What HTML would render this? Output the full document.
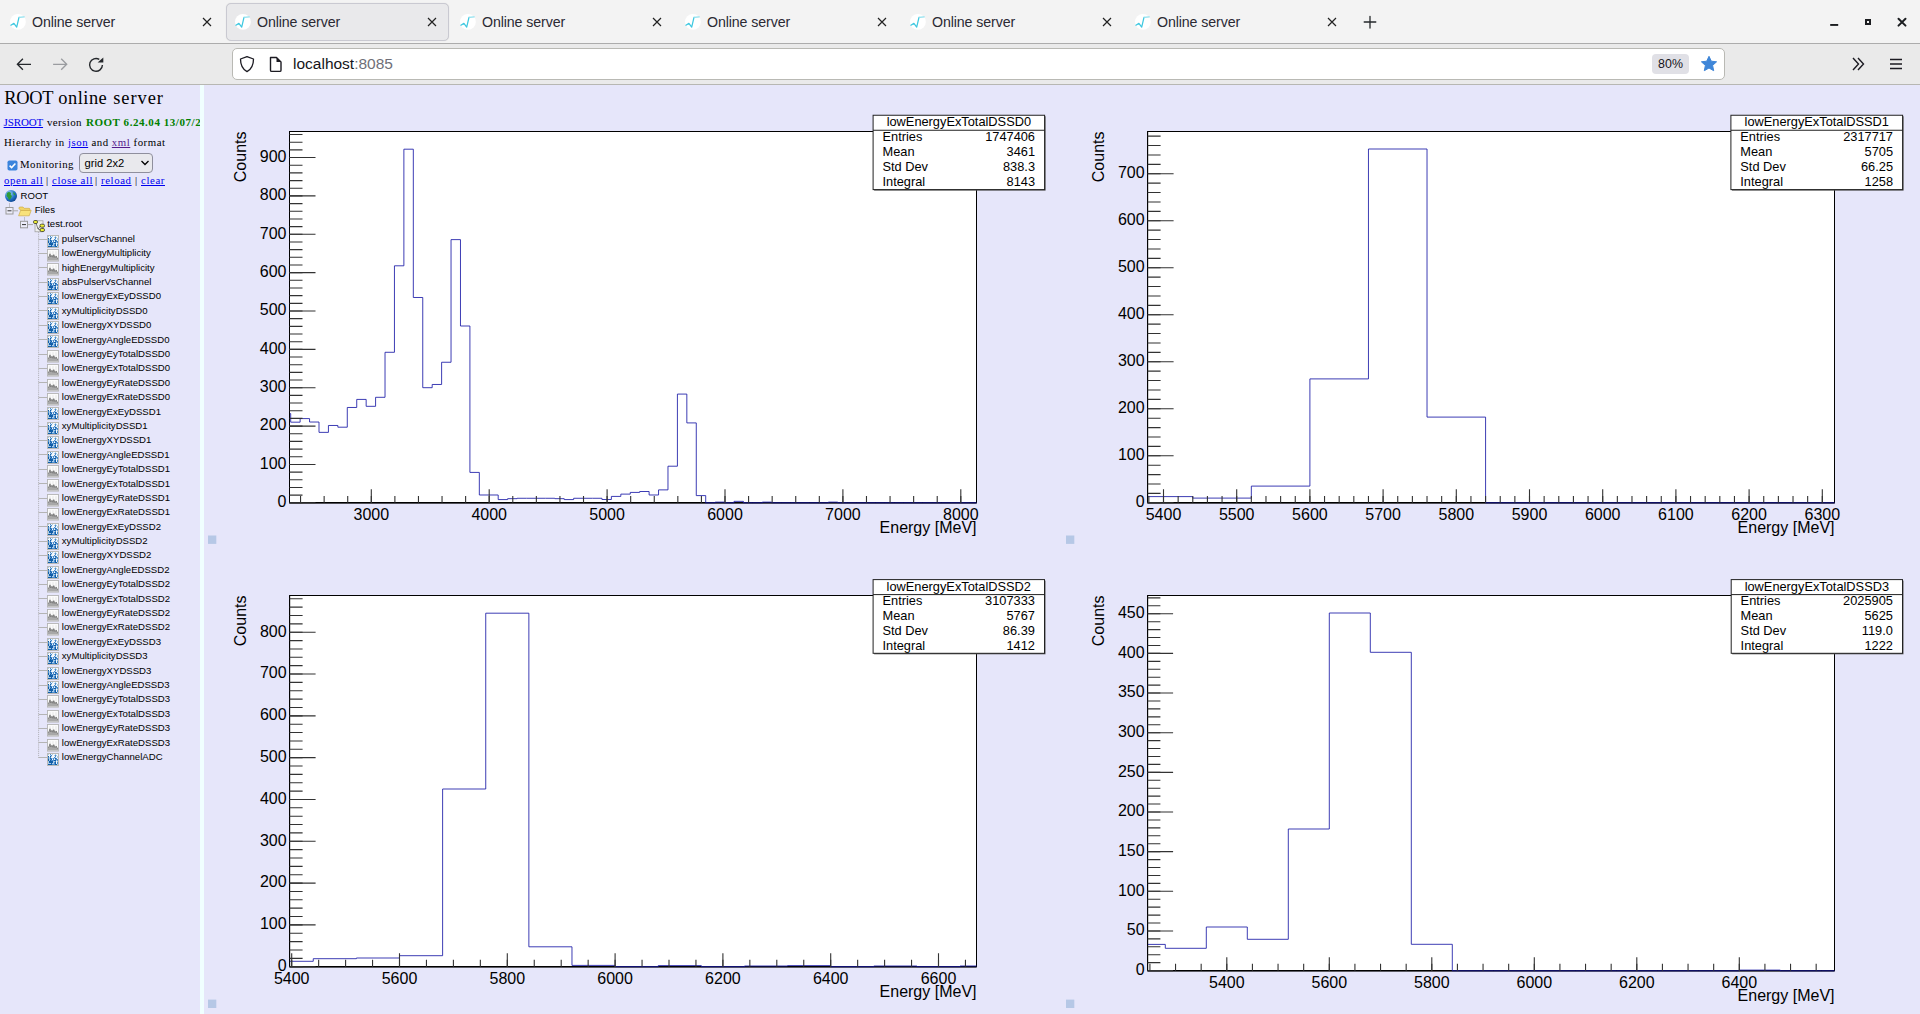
<!DOCTYPE html><html><head><meta charset="utf-8"><title>Online server</title><style>*{margin:0;padding:0;box-sizing:border-box}
html,body{width:1920px;height:1014px;overflow:hidden;background:#e6e6fa;font-family:'Liberation Sans', sans-serif}
.abs{position:absolute}
#tabbar{position:absolute;left:0;top:0;width:1920px;height:44px;background:#f3f3f3;border-bottom:1px solid #acacac}
#toolbar{position:absolute;left:0;top:44px;width:1920px;height:41px;background:#eaeaea;border-bottom:1px solid #b7b7b2}
.tab{position:absolute;top:3.4px;height:37.2px;width:223px}
.tab.sel{background:#e9e9eb;border:1px solid #c9c9d1;border-radius:5px;box-shadow:0 0 1px rgba(0,0,0,.15)}
.tabt{position:absolute;top:9px;font-size:14.2px;color:#2b2a33;white-space:nowrap;letter-spacing:-0.1px}
#side{position:absolute;left:0;top:85px;width:200px;height:929px;background:#e6e6fa;overflow:hidden;font-family:'Liberation Serif', serif;font-size:12px;color:#000}
#sep{position:absolute;left:200px;top:85px;width:4px;height:929px;background:#f0ffff}
.lnk{color:#0000ee;text-decoration:underline}
.tree{position:absolute;font-family:'Liberation Sans', sans-serif;font-size:9.6px;color:#000;white-space:nowrap}
</style></head><body><div id="tabbar"></div><div class="tab" style="left:1px"></div><div class="tab sel" style="left:226px"></div><div class="tab" style="left:451px"></div><div class="tab" style="left:676px"></div><div class="tab" style="left:901px"></div><div class="tab" style="left:1126px"></div><div class="abs" style="left:9.8px;top:13.8px;width:16px;height:16px"><svg width="16" height="16" viewBox="0 0 16 16"><circle cx="7.9" cy="7.95" r="7.9" fill="#fff"/><path d="M0.9,11.2 L3.9,9.4 L6.7,13.1 L9,3.4" fill="none" stroke="#3ec8e0" stroke-width="1.25" stroke-linejoin="round" stroke-linecap="round"/><path d="M9,3.4 L14.2,2.9" fill="none" stroke="#8fe0ee" stroke-width="1.2" stroke-linecap="round"/></svg></div><div class="tabt" style="left:32px;top:13.5px">Online server</div><svg class="abs" style="left:201px;top:16px" width="12" height="12"><path d="M2,2L10,10M10,2L2,10" stroke="#222" stroke-width="1.2"/></svg><div class="abs" style="left:234.8px;top:13.8px;width:16px;height:16px"><svg width="16" height="16" viewBox="0 0 16 16"><circle cx="7.9" cy="7.95" r="7.9" fill="#fff"/><path d="M0.9,11.2 L3.9,9.4 L6.7,13.1 L9,3.4" fill="none" stroke="#3ec8e0" stroke-width="1.25" stroke-linejoin="round" stroke-linecap="round"/><path d="M9,3.4 L14.2,2.9" fill="none" stroke="#8fe0ee" stroke-width="1.2" stroke-linecap="round"/></svg></div><div class="tabt" style="left:257px;top:13.5px">Online server</div><svg class="abs" style="left:426px;top:16px" width="12" height="12"><path d="M2,2L10,10M10,2L2,10" stroke="#222" stroke-width="1.2"/></svg><div class="abs" style="left:459.8px;top:13.8px;width:16px;height:16px"><svg width="16" height="16" viewBox="0 0 16 16"><circle cx="7.9" cy="7.95" r="7.9" fill="#fff"/><path d="M0.9,11.2 L3.9,9.4 L6.7,13.1 L9,3.4" fill="none" stroke="#3ec8e0" stroke-width="1.25" stroke-linejoin="round" stroke-linecap="round"/><path d="M9,3.4 L14.2,2.9" fill="none" stroke="#8fe0ee" stroke-width="1.2" stroke-linecap="round"/></svg></div><div class="tabt" style="left:482px;top:13.5px">Online server</div><svg class="abs" style="left:651px;top:16px" width="12" height="12"><path d="M2,2L10,10M10,2L2,10" stroke="#222" stroke-width="1.2"/></svg><div class="abs" style="left:684.8px;top:13.8px;width:16px;height:16px"><svg width="16" height="16" viewBox="0 0 16 16"><circle cx="7.9" cy="7.95" r="7.9" fill="#fff"/><path d="M0.9,11.2 L3.9,9.4 L6.7,13.1 L9,3.4" fill="none" stroke="#3ec8e0" stroke-width="1.25" stroke-linejoin="round" stroke-linecap="round"/><path d="M9,3.4 L14.2,2.9" fill="none" stroke="#8fe0ee" stroke-width="1.2" stroke-linecap="round"/></svg></div><div class="tabt" style="left:707px;top:13.5px">Online server</div><svg class="abs" style="left:876px;top:16px" width="12" height="12"><path d="M2,2L10,10M10,2L2,10" stroke="#222" stroke-width="1.2"/></svg><div class="abs" style="left:909.8px;top:13.8px;width:16px;height:16px"><svg width="16" height="16" viewBox="0 0 16 16"><circle cx="7.9" cy="7.95" r="7.9" fill="#fff"/><path d="M0.9,11.2 L3.9,9.4 L6.7,13.1 L9,3.4" fill="none" stroke="#3ec8e0" stroke-width="1.25" stroke-linejoin="round" stroke-linecap="round"/><path d="M9,3.4 L14.2,2.9" fill="none" stroke="#8fe0ee" stroke-width="1.2" stroke-linecap="round"/></svg></div><div class="tabt" style="left:932px;top:13.5px">Online server</div><svg class="abs" style="left:1101px;top:16px" width="12" height="12"><path d="M2,2L10,10M10,2L2,10" stroke="#222" stroke-width="1.2"/></svg><div class="abs" style="left:1134.8px;top:13.8px;width:16px;height:16px"><svg width="16" height="16" viewBox="0 0 16 16"><circle cx="7.9" cy="7.95" r="7.9" fill="#fff"/><path d="M0.9,11.2 L3.9,9.4 L6.7,13.1 L9,3.4" fill="none" stroke="#3ec8e0" stroke-width="1.25" stroke-linejoin="round" stroke-linecap="round"/><path d="M9,3.4 L14.2,2.9" fill="none" stroke="#8fe0ee" stroke-width="1.2" stroke-linecap="round"/></svg></div><div class="tabt" style="left:1157px;top:13.5px">Online server</div><svg class="abs" style="left:1326px;top:16px" width="12" height="12"><path d="M2,2L10,10M10,2L2,10" stroke="#222" stroke-width="1.2"/></svg><svg class="abs" style="left:1361.5px;top:14.4px" width="16" height="16"><path d="M8,2.3V14M2.2,8H13.8" stroke="#25282b" stroke-width="1.3" stroke-linecap="round"/></svg><svg class="abs" style="left:1820px;top:10px" width="100" height="24"><rect x="10.2" y="14" width="8" height="1.9" fill="#1b1d20"/><rect x="46" y="10" width="4" height="4" fill="none" stroke="#1b1d20" stroke-width="2"/><path d="M78.5,8.8L85.5,15.6M85.5,8.8L78.5,15.6" stroke="#1b1d20" stroke-width="2" stroke-linecap="round"/></svg><div id="toolbar"></div><svg class="abs" style="left:0;top:44px" width="120" height="40"><path d="M17.6,20.3H31M22.9,14.8L17.4,20.3L22.9,25.8" fill="none" stroke="#25282c" stroke-width="1.35"/><path d="M53.1,20.3H66.5M61.2,14.8L66.7,20.3L61.2,25.8" fill="none" stroke="#9a9ca0" stroke-width="1.35"/><path d="M102.4,21 A6.4,6.4 0 1 1 99.3,15.4" fill="none" stroke="#25282c" stroke-width="1.4"/><path d="M97.6,18.6 L103.3,13.6 L103.3,18.6 Z" fill="#25282c"/></svg><div class="abs" style="left:231.5px;top:48px;width:1493px;height:32px;background:#fff;border:1px solid #b9b9b4;border-radius:5px"></div><svg class="abs" style="left:236px;top:52px" width="60" height="24"><path d="M11,4.6 L17.5,7 C17.5,13.5 15,17.5 11,19.6 C7,17.5 4.5,13.5 4.5,7 Z" fill="none" stroke="#1c1b22" stroke-width="1.3" stroke-linejoin="round"/><path d="M34.5,5.5 H40.5 L45,10 V18.2 A1.2,1.2 0 0 1 43.8,19.4 H35.7 A1.2,1.2 0 0 1 34.5,18.2 Z" fill="none" stroke="#1c1b22" stroke-width="1.4" stroke-linejoin="round"/><path d="M40.5,5.5 V10 H45 Z" fill="#1c1b22"/></svg><div class="abs" style="left:293px;top:54.8px;font-size:15.5px;color:#15141a;white-space:nowrap">localhost<span style="color:#6f6f78">:8085</span></div><div class="abs" style="left:1652px;top:54px;width:37px;height:20px;background:#e0e0e6;border-radius:4px;font-size:12.4px;color:#15141a;text-align:center;line-height:20px">80%</div><svg class="abs" style="left:1700px;top:55px" width="18" height="18"><path d="M9,1.3 L11.3,6.2 L16.6,6.8 L12.6,10.4 L13.7,15.7 L9,13 L4.3,15.7 L5.4,10.4 L1.4,6.8 L6.7,6.2 Z" fill="#3f86d8" stroke="#3f86d8" stroke-width="1" stroke-linejoin="round"/></svg><svg class="abs" style="left:1848px;top:54px" width="60" height="20"><path d="M5,4 L10.5,10 L5,16 M10,4 L15.5,10 L10,16" fill="none" stroke="#1c1b22" stroke-width="1.4"/><path d="M42,5.5H54M42,10H54M42,14.5H54" stroke="#1c1b22" stroke-width="1.4"/></svg><div id="side"><div class="abs" style="left:4.3px;top:3.2px;font-size:18.4px;white-space:nowrap;letter-spacing:-0.3px">ROOT</div><div class="abs" style="left:58.3px;top:3.2px;font-size:18.4px;white-space:nowrap;letter-spacing:0.5px">online</div><div class="abs" style="left:113.2px;top:3.2px;font-size:18.4px;white-space:nowrap;letter-spacing:0.95px">server</div><div class="abs" style="left:3.6px;top:30.6px;font-size:11px;white-space:nowrap;letter-spacing:-0.15px"><span class="lnk">JSROOT</span></div><div class="abs" style="left:47px;top:30.6px;font-size:11px;white-space:nowrap;letter-spacing:0.35px">version</div><div class="abs" style="left:85.9px;top:30.6px;font-size:11px;white-space:nowrap;letter-spacing:0.55px"><b style="color:#008000">ROOT 6.24.04 13/07/2021</b></div><div class="abs" style="left:4px;top:51.2px;font-size:10.8px;letter-spacing:0.54px;white-space:nowrap">Hierarchy in <span class="lnk">json</span> and <span class="lnk" style="color:#551a8b">xml</span> format</div><svg class="abs" style="left:6.5px;top:74.5px" width="11" height="11"><rect x="0.5" y="0.5" width="10" height="10" rx="1.8" fill="#3b84dc"/><path d="M2.6,5.6 L4.6,7.6 L8.4,3.4" fill="none" stroke="#fff" stroke-width="1.5"/></svg><div class="abs" style="left:20px;top:73px;font-size:10.8px;letter-spacing:0.47px;white-space:nowrap">Monitoring</div><div class="abs" style="left:78.5px;top:68.2px;width:74px;height:19.5px;border:1px solid #8f8f9d;border-radius:4px;background:#e9e9ed;font-family:'Liberation Sans', sans-serif;font-size:11.2px;padding-left:5px;line-height:19.5px;color:#000">grid 2x2</div><svg class="abs" style="left:140px;top:74px" width="10" height="8"><path d="M1.5,2 L5,5.5 L8.5,2" fill="none" stroke="#000" stroke-width="1.3"/></svg><div class="abs" style="left:4px;top:88.5px;font-size:10.8px;letter-spacing:0.6px;white-space:nowrap"><span class="lnk">open all</span></div><div class="abs" style="left:46px;top:88.5px;font-size:10.8px;letter-spacing:0.6px">|</div><div class="abs" style="left:52px;top:88.5px;font-size:10.8px;letter-spacing:0.6px;white-space:nowrap"><span class="lnk">close all</span></div><div class="abs" style="left:95px;top:88.5px;font-size:10.8px;letter-spacing:0.6px">|</div><div class="abs" style="left:101px;top:88.5px;font-size:10.8px;letter-spacing:0.6px;white-space:nowrap"><span class="lnk">reload</span></div><div class="abs" style="left:135px;top:88.5px;font-size:10.8px;letter-spacing:0.6px">|</div><div class="abs" style="left:141px;top:88.5px;font-size:10.8px;letter-spacing:0.6px;white-space:nowrap"><span class="lnk">clear</span></div></div><svg class="abs" style="left:4px;top:189px" width="14" height="15"><defs><radialGradient id="gg" cx="0.35" cy="0.3" r="0.8"><stop offset="0" stop-color="#9fd3ff"/><stop offset="0.6" stop-color="#1f6fc4"/><stop offset="1" stop-color="#0b3c86"/></radialGradient></defs><circle cx="7" cy="7" r="6" fill="url(#gg)"/><path d="M3,4 Q5,2 7,4 Q6,6 8,7 Q7,10 5,11 Q4,8 2.5,7 Z" fill="#2e9b3a"/><path d="M9,3 Q11,4 11.5,6 Q10,7 9.5,5 Z" fill="#2e9b3a"/></svg><div class="tree" style="left:20.5px;top:189.7px">ROOT</div><svg class="abs" style="left:0;top:200px" width="60" height="560"><path d="M9.5,3.5V7" stroke="#999" stroke-width="1" stroke-dasharray="1,1"/><rect x="6" y="7.5" width="7" height="6.5" fill="#fff" fill-opacity="0.3" stroke="#9a9a9a" stroke-width="1"/><path d="M7.5,10.8H11.5" stroke="#333" stroke-width="1"/><path d="M13,10.8H18" stroke="#aaa" stroke-width="1"/><path d="M24.5,17.5V21" stroke="#999" stroke-width="1" stroke-dasharray="1,1"/><rect x="20.5" y="21.3" width="7" height="6.5" fill="#fff" fill-opacity="0.3" stroke="#9a9a9a" stroke-width="1"/><path d="M22,24.6H26" stroke="#333" stroke-width="1"/><path d="M27.5,24.6H33" stroke="#aaa" stroke-width="1"/><path d="M38.6,32V557.8" fill="none" stroke="#b4b4bc" stroke-width="1" stroke-dasharray="1.2,0.9"/></svg><svg class="abs" style="left:17.5px;top:205.5px" width="14" height="11"><path d="M0.8,2.5 Q0.8,1 2,1 H5 L6.2,2.3 H11 Q12,2.3 12,3.3 V4.5 H3 Z" fill="#f2d66a" stroke="#c9a43a" stroke-width="0.6"/><path d="M0.6,9.8 L2.6,4.4 H13.2 L11.2,9.8 Z" fill="#f8e27c" stroke="#c9a43a" stroke-width="0.6"/></svg><div class="tree" style="left:34.7px;top:204.2px">Files</div><svg class="abs" style="left:32.5px;top:219.5px" width="14" height="13"><rect x="2" y="0.8" width="8" height="11" fill="#eee" stroke="#999" stroke-width="0.7"/><rect x="0.5" y="0.5" width="4" height="3" rx="1.3" fill="#ee3" stroke="#222" stroke-width="0.7"/><rect x="7" y="4.2" width="4.5" height="3" rx="1.3" fill="#ee3" stroke="#222" stroke-width="0.7"/><rect x="7" y="8.5" width="4.5" height="3" rx="1.3" fill="#ee3" stroke="#222" stroke-width="0.7"/><path d="M3,3 L5,9 L7.5,6 M5,9 L7.5,10" stroke="#333" stroke-width="0.6" fill="none"/></svg><div class="tree" style="left:47.2px;top:217.6px">test.root</div><div class="abs" style="left:47px;top:234px;width:12px;height:13px"><svg width="12" height="13" shape-rendering="crispEdges"><rect x="0.5" y="0.5" width="11" height="11.6" fill="#dde6ee" stroke="#b5b5b0" stroke-width="0.9"/><path d="M1,1.00h1.05v1.12h-1.05zM5,1.00h1.05v1.12h-1.05zM8,1.00h1.05v1.12h-1.05zM3,2.06h1.05v1.12h-1.05zM7,2.06h1.05v1.12h-1.05zM9,2.06h1.05v1.12h-1.05zM4,3.12h1.05v1.12h-1.05zM10,3.12h1.05v1.12h-1.05zM2,4.18h1.05v1.12h-1.05zM8,4.18h1.05v1.12h-1.05zM10,4.18h1.05v1.12h-1.05zM2,5.24h1.05v1.12h-1.05zM5,5.24h1.05v1.12h-1.05zM7,5.24h1.05v1.12h-1.05zM2,6.30h1.05v1.12h-1.05zM2,7.36h1.05v1.12h-1.05zM9,7.36h1.05v1.12h-1.05zM1,8.42h1.05v1.12h-1.05zM6,8.42h1.05v1.12h-1.05zM7,8.42h1.05v1.12h-1.05zM10,8.42h1.05v1.12h-1.05zM1,9.48h1.05v1.12h-1.05zM2,9.48h1.05v1.12h-1.05zM3,9.48h1.05v1.12h-1.05zM5,9.48h1.05v1.12h-1.05zM6,9.48h1.05v1.12h-1.05zM10,10.54h1.05v1.12h-1.05z" fill="#a8cae8"/><path d="M2,1.00h1.05v1.12h-1.05zM4,1.00h1.05v1.12h-1.05zM6,1.00h1.05v1.12h-1.05zM7,1.00h1.05v1.12h-1.05zM9,1.00h1.05v1.12h-1.05zM10,1.00h1.05v1.12h-1.05zM1,2.06h1.05v1.12h-1.05zM2,2.06h1.05v1.12h-1.05zM5,2.06h1.05v1.12h-1.05zM6,2.06h1.05v1.12h-1.05zM10,2.06h1.05v1.12h-1.05zM2,3.12h1.05v1.12h-1.05zM5,3.12h1.05v1.12h-1.05zM6,3.12h1.05v1.12h-1.05zM7,3.12h1.05v1.12h-1.05zM9,3.12h1.05v1.12h-1.05zM4,4.18h1.05v1.12h-1.05zM5,4.18h1.05v1.12h-1.05zM6,4.18h1.05v1.12h-1.05zM9,4.18h1.05v1.12h-1.05zM10,5.24h1.05v1.12h-1.05zM5,6.30h1.05v1.12h-1.05zM7,6.30h1.05v1.12h-1.05zM9,8.42h1.05v1.12h-1.05zM9,9.48h1.05v1.12h-1.05z" fill="#f4f8fc"/><path d="M3,1.00h1.05v1.12h-1.05zM4,2.06h1.05v1.12h-1.05zM8,2.06h1.05v1.12h-1.05zM8,3.12h1.05v1.12h-1.05zM1,4.18h1.05v1.12h-1.05zM3,4.18h1.05v1.12h-1.05zM7,4.18h1.05v1.12h-1.05zM1,5.24h1.05v1.12h-1.05zM4,5.24h1.05v1.12h-1.05zM6,5.24h1.05v1.12h-1.05zM9,5.24h1.05v1.12h-1.05zM3,6.30h1.05v1.12h-1.05zM6,6.30h1.05v1.12h-1.05zM8,6.30h1.05v1.12h-1.05zM9,6.30h1.05v1.12h-1.05zM10,6.30h1.05v1.12h-1.05zM4,7.36h1.05v1.12h-1.05zM5,7.36h1.05v1.12h-1.05zM6,7.36h1.05v1.12h-1.05zM10,7.36h1.05v1.12h-1.05zM8,8.42h1.05v1.12h-1.05zM7,9.48h1.05v1.12h-1.05zM10,9.48h1.05v1.12h-1.05zM5,10.54h1.05v1.12h-1.05zM6,10.54h1.05v1.12h-1.05zM7,10.54h1.05v1.12h-1.05z" fill="#4a8ccc"/><path d="M1,3.12h1.05v1.12h-1.05zM3,3.12h1.05v1.12h-1.05zM3,5.24h1.05v1.12h-1.05zM8,5.24h1.05v1.12h-1.05zM1,6.30h1.05v1.12h-1.05zM4,6.30h1.05v1.12h-1.05zM1,7.36h1.05v1.12h-1.05zM3,7.36h1.05v1.12h-1.05zM7,7.36h1.05v1.12h-1.05zM8,7.36h1.05v1.12h-1.05zM2,8.42h1.05v1.12h-1.05zM3,8.42h1.05v1.12h-1.05zM4,8.42h1.05v1.12h-1.05zM5,8.42h1.05v1.12h-1.05zM4,9.48h1.05v1.12h-1.05zM8,9.48h1.05v1.12h-1.05zM1,10.54h1.05v1.12h-1.05zM2,10.54h1.05v1.12h-1.05zM3,10.54h1.05v1.12h-1.05zM4,10.54h1.05v1.12h-1.05zM8,10.54h1.05v1.12h-1.05zM9,10.54h1.05v1.12h-1.05z" fill="#115ea8"/></svg></div><div class="tree" style="left:61.8px;top:232.8px">pulserVsChannel</div><svg class="abs" style="left:38px;top:238px" width="10" height="2"><path d="M0.6,1.5H9.2" stroke="#b4b4b4" stroke-width="1"/></svg><div class="abs" style="left:47px;top:248px;width:12px;height:13px"><svg width="12" height="13"><rect x="0.5" y="0.5" width="11" height="11.6" fill="#fbfbfb" stroke="#b4b4b4" stroke-width="0.9"/><path d="M3,2.2v5M6,2.2v5M9,2.2v5" stroke="#dcdcdc" stroke-width="0.7"/><path d="M1,11.6 V8.6 L2,7.8 L3,4.8 L3.8,8 L5,6.2 L6,8.3 L6.8,5.6 L8,8.6 L9.2,7 L10,9 L11,9.6 V11.6 Z" fill="#a8a8a8"/><path d="M1,8.6 L2,7.8 L3,4.8 L3.8,8 L5,6.2 L6,8.3 L6.8,5.6 L8,8.6 L9.2,7 L10,9 L11,9.6" fill="none" stroke="#555" stroke-width="0.6"/></svg></div><div class="tree" style="left:61.8px;top:247.2px">lowEnergyMultiplicity</div><svg class="abs" style="left:38px;top:252px" width="10" height="2"><path d="M0.6,1.5H9.2" stroke="#b4b4b4" stroke-width="1"/></svg><div class="abs" style="left:47px;top:262px;width:12px;height:13px"><svg width="12" height="13"><rect x="0.5" y="0.5" width="11" height="11.6" fill="#fbfbfb" stroke="#b4b4b4" stroke-width="0.9"/><path d="M3,2.2v5M6,2.2v5M9,2.2v5" stroke="#dcdcdc" stroke-width="0.7"/><path d="M1,11.6 V8.6 L2,7.8 L3,4.8 L3.8,8 L5,6.2 L6,8.3 L6.8,5.6 L8,8.6 L9.2,7 L10,9 L11,9.6 V11.6 Z" fill="#a8a8a8"/><path d="M1,8.6 L2,7.8 L3,4.8 L3.8,8 L5,6.2 L6,8.3 L6.8,5.6 L8,8.6 L9.2,7 L10,9 L11,9.6" fill="none" stroke="#555" stroke-width="0.6"/></svg></div><div class="tree" style="left:61.8px;top:261.59px">highEnergyMultiplicity</div><svg class="abs" style="left:38px;top:266px" width="10" height="2"><path d="M0.6,1.5H9.2" stroke="#b4b4b4" stroke-width="1"/></svg><div class="abs" style="left:47px;top:277px;width:12px;height:13px"><svg width="12" height="13" shape-rendering="crispEdges"><rect x="0.5" y="0.5" width="11" height="11.6" fill="#dde6ee" stroke="#b5b5b0" stroke-width="0.9"/><path d="M1,1.00h1.05v1.12h-1.05zM5,1.00h1.05v1.12h-1.05zM8,1.00h1.05v1.12h-1.05zM3,2.06h1.05v1.12h-1.05zM7,2.06h1.05v1.12h-1.05zM9,2.06h1.05v1.12h-1.05zM4,3.12h1.05v1.12h-1.05zM10,3.12h1.05v1.12h-1.05zM2,4.18h1.05v1.12h-1.05zM8,4.18h1.05v1.12h-1.05zM10,4.18h1.05v1.12h-1.05zM2,5.24h1.05v1.12h-1.05zM5,5.24h1.05v1.12h-1.05zM7,5.24h1.05v1.12h-1.05zM2,6.30h1.05v1.12h-1.05zM2,7.36h1.05v1.12h-1.05zM9,7.36h1.05v1.12h-1.05zM1,8.42h1.05v1.12h-1.05zM6,8.42h1.05v1.12h-1.05zM7,8.42h1.05v1.12h-1.05zM10,8.42h1.05v1.12h-1.05zM1,9.48h1.05v1.12h-1.05zM2,9.48h1.05v1.12h-1.05zM3,9.48h1.05v1.12h-1.05zM5,9.48h1.05v1.12h-1.05zM6,9.48h1.05v1.12h-1.05zM10,10.54h1.05v1.12h-1.05z" fill="#a8cae8"/><path d="M2,1.00h1.05v1.12h-1.05zM4,1.00h1.05v1.12h-1.05zM6,1.00h1.05v1.12h-1.05zM7,1.00h1.05v1.12h-1.05zM9,1.00h1.05v1.12h-1.05zM10,1.00h1.05v1.12h-1.05zM1,2.06h1.05v1.12h-1.05zM2,2.06h1.05v1.12h-1.05zM5,2.06h1.05v1.12h-1.05zM6,2.06h1.05v1.12h-1.05zM10,2.06h1.05v1.12h-1.05zM2,3.12h1.05v1.12h-1.05zM5,3.12h1.05v1.12h-1.05zM6,3.12h1.05v1.12h-1.05zM7,3.12h1.05v1.12h-1.05zM9,3.12h1.05v1.12h-1.05zM4,4.18h1.05v1.12h-1.05zM5,4.18h1.05v1.12h-1.05zM6,4.18h1.05v1.12h-1.05zM9,4.18h1.05v1.12h-1.05zM10,5.24h1.05v1.12h-1.05zM5,6.30h1.05v1.12h-1.05zM7,6.30h1.05v1.12h-1.05zM9,8.42h1.05v1.12h-1.05zM9,9.48h1.05v1.12h-1.05z" fill="#f4f8fc"/><path d="M3,1.00h1.05v1.12h-1.05zM4,2.06h1.05v1.12h-1.05zM8,2.06h1.05v1.12h-1.05zM8,3.12h1.05v1.12h-1.05zM1,4.18h1.05v1.12h-1.05zM3,4.18h1.05v1.12h-1.05zM7,4.18h1.05v1.12h-1.05zM1,5.24h1.05v1.12h-1.05zM4,5.24h1.05v1.12h-1.05zM6,5.24h1.05v1.12h-1.05zM9,5.24h1.05v1.12h-1.05zM3,6.30h1.05v1.12h-1.05zM6,6.30h1.05v1.12h-1.05zM8,6.30h1.05v1.12h-1.05zM9,6.30h1.05v1.12h-1.05zM10,6.30h1.05v1.12h-1.05zM4,7.36h1.05v1.12h-1.05zM5,7.36h1.05v1.12h-1.05zM6,7.36h1.05v1.12h-1.05zM10,7.36h1.05v1.12h-1.05zM8,8.42h1.05v1.12h-1.05zM7,9.48h1.05v1.12h-1.05zM10,9.48h1.05v1.12h-1.05zM5,10.54h1.05v1.12h-1.05zM6,10.54h1.05v1.12h-1.05zM7,10.54h1.05v1.12h-1.05z" fill="#4a8ccc"/><path d="M1,3.12h1.05v1.12h-1.05zM3,3.12h1.05v1.12h-1.05zM3,5.24h1.05v1.12h-1.05zM8,5.24h1.05v1.12h-1.05zM1,6.30h1.05v1.12h-1.05zM4,6.30h1.05v1.12h-1.05zM1,7.36h1.05v1.12h-1.05zM3,7.36h1.05v1.12h-1.05zM7,7.36h1.05v1.12h-1.05zM8,7.36h1.05v1.12h-1.05zM2,8.42h1.05v1.12h-1.05zM3,8.42h1.05v1.12h-1.05zM4,8.42h1.05v1.12h-1.05zM5,8.42h1.05v1.12h-1.05zM4,9.48h1.05v1.12h-1.05zM8,9.48h1.05v1.12h-1.05zM1,10.54h1.05v1.12h-1.05zM2,10.54h1.05v1.12h-1.05zM3,10.54h1.05v1.12h-1.05zM4,10.54h1.05v1.12h-1.05zM8,10.54h1.05v1.12h-1.05zM9,10.54h1.05v1.12h-1.05z" fill="#115ea8"/></svg></div><div class="tree" style="left:61.8px;top:275.99px">absPulserVsChannel</div><svg class="abs" style="left:38px;top:281px" width="10" height="2"><path d="M0.6,1.5H9.2" stroke="#b4b4b4" stroke-width="1"/></svg><div class="abs" style="left:47px;top:291px;width:12px;height:13px"><svg width="12" height="13" shape-rendering="crispEdges"><rect x="0.5" y="0.5" width="11" height="11.6" fill="#dde6ee" stroke="#b5b5b0" stroke-width="0.9"/><path d="M1,1.00h1.05v1.12h-1.05zM5,1.00h1.05v1.12h-1.05zM8,1.00h1.05v1.12h-1.05zM3,2.06h1.05v1.12h-1.05zM7,2.06h1.05v1.12h-1.05zM9,2.06h1.05v1.12h-1.05zM4,3.12h1.05v1.12h-1.05zM10,3.12h1.05v1.12h-1.05zM2,4.18h1.05v1.12h-1.05zM8,4.18h1.05v1.12h-1.05zM10,4.18h1.05v1.12h-1.05zM2,5.24h1.05v1.12h-1.05zM5,5.24h1.05v1.12h-1.05zM7,5.24h1.05v1.12h-1.05zM2,6.30h1.05v1.12h-1.05zM2,7.36h1.05v1.12h-1.05zM9,7.36h1.05v1.12h-1.05zM1,8.42h1.05v1.12h-1.05zM6,8.42h1.05v1.12h-1.05zM7,8.42h1.05v1.12h-1.05zM10,8.42h1.05v1.12h-1.05zM1,9.48h1.05v1.12h-1.05zM2,9.48h1.05v1.12h-1.05zM3,9.48h1.05v1.12h-1.05zM5,9.48h1.05v1.12h-1.05zM6,9.48h1.05v1.12h-1.05zM10,10.54h1.05v1.12h-1.05z" fill="#a8cae8"/><path d="M2,1.00h1.05v1.12h-1.05zM4,1.00h1.05v1.12h-1.05zM6,1.00h1.05v1.12h-1.05zM7,1.00h1.05v1.12h-1.05zM9,1.00h1.05v1.12h-1.05zM10,1.00h1.05v1.12h-1.05zM1,2.06h1.05v1.12h-1.05zM2,2.06h1.05v1.12h-1.05zM5,2.06h1.05v1.12h-1.05zM6,2.06h1.05v1.12h-1.05zM10,2.06h1.05v1.12h-1.05zM2,3.12h1.05v1.12h-1.05zM5,3.12h1.05v1.12h-1.05zM6,3.12h1.05v1.12h-1.05zM7,3.12h1.05v1.12h-1.05zM9,3.12h1.05v1.12h-1.05zM4,4.18h1.05v1.12h-1.05zM5,4.18h1.05v1.12h-1.05zM6,4.18h1.05v1.12h-1.05zM9,4.18h1.05v1.12h-1.05zM10,5.24h1.05v1.12h-1.05zM5,6.30h1.05v1.12h-1.05zM7,6.30h1.05v1.12h-1.05zM9,8.42h1.05v1.12h-1.05zM9,9.48h1.05v1.12h-1.05z" fill="#f4f8fc"/><path d="M3,1.00h1.05v1.12h-1.05zM4,2.06h1.05v1.12h-1.05zM8,2.06h1.05v1.12h-1.05zM8,3.12h1.05v1.12h-1.05zM1,4.18h1.05v1.12h-1.05zM3,4.18h1.05v1.12h-1.05zM7,4.18h1.05v1.12h-1.05zM1,5.24h1.05v1.12h-1.05zM4,5.24h1.05v1.12h-1.05zM6,5.24h1.05v1.12h-1.05zM9,5.24h1.05v1.12h-1.05zM3,6.30h1.05v1.12h-1.05zM6,6.30h1.05v1.12h-1.05zM8,6.30h1.05v1.12h-1.05zM9,6.30h1.05v1.12h-1.05zM10,6.30h1.05v1.12h-1.05zM4,7.36h1.05v1.12h-1.05zM5,7.36h1.05v1.12h-1.05zM6,7.36h1.05v1.12h-1.05zM10,7.36h1.05v1.12h-1.05zM8,8.42h1.05v1.12h-1.05zM7,9.48h1.05v1.12h-1.05zM10,9.48h1.05v1.12h-1.05zM5,10.54h1.05v1.12h-1.05zM6,10.54h1.05v1.12h-1.05zM7,10.54h1.05v1.12h-1.05z" fill="#4a8ccc"/><path d="M1,3.12h1.05v1.12h-1.05zM3,3.12h1.05v1.12h-1.05zM3,5.24h1.05v1.12h-1.05zM8,5.24h1.05v1.12h-1.05zM1,6.30h1.05v1.12h-1.05zM4,6.30h1.05v1.12h-1.05zM1,7.36h1.05v1.12h-1.05zM3,7.36h1.05v1.12h-1.05zM7,7.36h1.05v1.12h-1.05zM8,7.36h1.05v1.12h-1.05zM2,8.42h1.05v1.12h-1.05zM3,8.42h1.05v1.12h-1.05zM4,8.42h1.05v1.12h-1.05zM5,8.42h1.05v1.12h-1.05zM4,9.48h1.05v1.12h-1.05zM8,9.48h1.05v1.12h-1.05zM1,10.54h1.05v1.12h-1.05zM2,10.54h1.05v1.12h-1.05zM3,10.54h1.05v1.12h-1.05zM4,10.54h1.05v1.12h-1.05zM8,10.54h1.05v1.12h-1.05zM9,10.54h1.05v1.12h-1.05z" fill="#115ea8"/></svg></div><div class="tree" style="left:61.8px;top:290.38px">lowEnergyExEyDSSD0</div><svg class="abs" style="left:38px;top:295px" width="10" height="2"><path d="M0.6,1.5H9.2" stroke="#b4b4b4" stroke-width="1"/></svg><div class="abs" style="left:47px;top:306px;width:12px;height:13px"><svg width="12" height="13" shape-rendering="crispEdges"><rect x="0.5" y="0.5" width="11" height="11.6" fill="#dde6ee" stroke="#b5b5b0" stroke-width="0.9"/><path d="M1,1.00h1.05v1.12h-1.05zM5,1.00h1.05v1.12h-1.05zM8,1.00h1.05v1.12h-1.05zM3,2.06h1.05v1.12h-1.05zM7,2.06h1.05v1.12h-1.05zM9,2.06h1.05v1.12h-1.05zM4,3.12h1.05v1.12h-1.05zM10,3.12h1.05v1.12h-1.05zM2,4.18h1.05v1.12h-1.05zM8,4.18h1.05v1.12h-1.05zM10,4.18h1.05v1.12h-1.05zM2,5.24h1.05v1.12h-1.05zM5,5.24h1.05v1.12h-1.05zM7,5.24h1.05v1.12h-1.05zM2,6.30h1.05v1.12h-1.05zM2,7.36h1.05v1.12h-1.05zM9,7.36h1.05v1.12h-1.05zM1,8.42h1.05v1.12h-1.05zM6,8.42h1.05v1.12h-1.05zM7,8.42h1.05v1.12h-1.05zM10,8.42h1.05v1.12h-1.05zM1,9.48h1.05v1.12h-1.05zM2,9.48h1.05v1.12h-1.05zM3,9.48h1.05v1.12h-1.05zM5,9.48h1.05v1.12h-1.05zM6,9.48h1.05v1.12h-1.05zM10,10.54h1.05v1.12h-1.05z" fill="#a8cae8"/><path d="M2,1.00h1.05v1.12h-1.05zM4,1.00h1.05v1.12h-1.05zM6,1.00h1.05v1.12h-1.05zM7,1.00h1.05v1.12h-1.05zM9,1.00h1.05v1.12h-1.05zM10,1.00h1.05v1.12h-1.05zM1,2.06h1.05v1.12h-1.05zM2,2.06h1.05v1.12h-1.05zM5,2.06h1.05v1.12h-1.05zM6,2.06h1.05v1.12h-1.05zM10,2.06h1.05v1.12h-1.05zM2,3.12h1.05v1.12h-1.05zM5,3.12h1.05v1.12h-1.05zM6,3.12h1.05v1.12h-1.05zM7,3.12h1.05v1.12h-1.05zM9,3.12h1.05v1.12h-1.05zM4,4.18h1.05v1.12h-1.05zM5,4.18h1.05v1.12h-1.05zM6,4.18h1.05v1.12h-1.05zM9,4.18h1.05v1.12h-1.05zM10,5.24h1.05v1.12h-1.05zM5,6.30h1.05v1.12h-1.05zM7,6.30h1.05v1.12h-1.05zM9,8.42h1.05v1.12h-1.05zM9,9.48h1.05v1.12h-1.05z" fill="#f4f8fc"/><path d="M3,1.00h1.05v1.12h-1.05zM4,2.06h1.05v1.12h-1.05zM8,2.06h1.05v1.12h-1.05zM8,3.12h1.05v1.12h-1.05zM1,4.18h1.05v1.12h-1.05zM3,4.18h1.05v1.12h-1.05zM7,4.18h1.05v1.12h-1.05zM1,5.24h1.05v1.12h-1.05zM4,5.24h1.05v1.12h-1.05zM6,5.24h1.05v1.12h-1.05zM9,5.24h1.05v1.12h-1.05zM3,6.30h1.05v1.12h-1.05zM6,6.30h1.05v1.12h-1.05zM8,6.30h1.05v1.12h-1.05zM9,6.30h1.05v1.12h-1.05zM10,6.30h1.05v1.12h-1.05zM4,7.36h1.05v1.12h-1.05zM5,7.36h1.05v1.12h-1.05zM6,7.36h1.05v1.12h-1.05zM10,7.36h1.05v1.12h-1.05zM8,8.42h1.05v1.12h-1.05zM7,9.48h1.05v1.12h-1.05zM10,9.48h1.05v1.12h-1.05zM5,10.54h1.05v1.12h-1.05zM6,10.54h1.05v1.12h-1.05zM7,10.54h1.05v1.12h-1.05z" fill="#4a8ccc"/><path d="M1,3.12h1.05v1.12h-1.05zM3,3.12h1.05v1.12h-1.05zM3,5.24h1.05v1.12h-1.05zM8,5.24h1.05v1.12h-1.05zM1,6.30h1.05v1.12h-1.05zM4,6.30h1.05v1.12h-1.05zM1,7.36h1.05v1.12h-1.05zM3,7.36h1.05v1.12h-1.05zM7,7.36h1.05v1.12h-1.05zM8,7.36h1.05v1.12h-1.05zM2,8.42h1.05v1.12h-1.05zM3,8.42h1.05v1.12h-1.05zM4,8.42h1.05v1.12h-1.05zM5,8.42h1.05v1.12h-1.05zM4,9.48h1.05v1.12h-1.05zM8,9.48h1.05v1.12h-1.05zM1,10.54h1.05v1.12h-1.05zM2,10.54h1.05v1.12h-1.05zM3,10.54h1.05v1.12h-1.05zM4,10.54h1.05v1.12h-1.05zM8,10.54h1.05v1.12h-1.05zM9,10.54h1.05v1.12h-1.05z" fill="#115ea8"/></svg></div><div class="tree" style="left:61.8px;top:304.77px">xyMultiplicityDSSD0</div><svg class="abs" style="left:38px;top:309px" width="10" height="2"><path d="M0.6,1.5H9.2" stroke="#b4b4b4" stroke-width="1"/></svg><div class="abs" style="left:47px;top:320px;width:12px;height:13px"><svg width="12" height="13" shape-rendering="crispEdges"><rect x="0.5" y="0.5" width="11" height="11.6" fill="#dde6ee" stroke="#b5b5b0" stroke-width="0.9"/><path d="M1,1.00h1.05v1.12h-1.05zM5,1.00h1.05v1.12h-1.05zM8,1.00h1.05v1.12h-1.05zM3,2.06h1.05v1.12h-1.05zM7,2.06h1.05v1.12h-1.05zM9,2.06h1.05v1.12h-1.05zM4,3.12h1.05v1.12h-1.05zM10,3.12h1.05v1.12h-1.05zM2,4.18h1.05v1.12h-1.05zM8,4.18h1.05v1.12h-1.05zM10,4.18h1.05v1.12h-1.05zM2,5.24h1.05v1.12h-1.05zM5,5.24h1.05v1.12h-1.05zM7,5.24h1.05v1.12h-1.05zM2,6.30h1.05v1.12h-1.05zM2,7.36h1.05v1.12h-1.05zM9,7.36h1.05v1.12h-1.05zM1,8.42h1.05v1.12h-1.05zM6,8.42h1.05v1.12h-1.05zM7,8.42h1.05v1.12h-1.05zM10,8.42h1.05v1.12h-1.05zM1,9.48h1.05v1.12h-1.05zM2,9.48h1.05v1.12h-1.05zM3,9.48h1.05v1.12h-1.05zM5,9.48h1.05v1.12h-1.05zM6,9.48h1.05v1.12h-1.05zM10,10.54h1.05v1.12h-1.05z" fill="#a8cae8"/><path d="M2,1.00h1.05v1.12h-1.05zM4,1.00h1.05v1.12h-1.05zM6,1.00h1.05v1.12h-1.05zM7,1.00h1.05v1.12h-1.05zM9,1.00h1.05v1.12h-1.05zM10,1.00h1.05v1.12h-1.05zM1,2.06h1.05v1.12h-1.05zM2,2.06h1.05v1.12h-1.05zM5,2.06h1.05v1.12h-1.05zM6,2.06h1.05v1.12h-1.05zM10,2.06h1.05v1.12h-1.05zM2,3.12h1.05v1.12h-1.05zM5,3.12h1.05v1.12h-1.05zM6,3.12h1.05v1.12h-1.05zM7,3.12h1.05v1.12h-1.05zM9,3.12h1.05v1.12h-1.05zM4,4.18h1.05v1.12h-1.05zM5,4.18h1.05v1.12h-1.05zM6,4.18h1.05v1.12h-1.05zM9,4.18h1.05v1.12h-1.05zM10,5.24h1.05v1.12h-1.05zM5,6.30h1.05v1.12h-1.05zM7,6.30h1.05v1.12h-1.05zM9,8.42h1.05v1.12h-1.05zM9,9.48h1.05v1.12h-1.05z" fill="#f4f8fc"/><path d="M3,1.00h1.05v1.12h-1.05zM4,2.06h1.05v1.12h-1.05zM8,2.06h1.05v1.12h-1.05zM8,3.12h1.05v1.12h-1.05zM1,4.18h1.05v1.12h-1.05zM3,4.18h1.05v1.12h-1.05zM7,4.18h1.05v1.12h-1.05zM1,5.24h1.05v1.12h-1.05zM4,5.24h1.05v1.12h-1.05zM6,5.24h1.05v1.12h-1.05zM9,5.24h1.05v1.12h-1.05zM3,6.30h1.05v1.12h-1.05zM6,6.30h1.05v1.12h-1.05zM8,6.30h1.05v1.12h-1.05zM9,6.30h1.05v1.12h-1.05zM10,6.30h1.05v1.12h-1.05zM4,7.36h1.05v1.12h-1.05zM5,7.36h1.05v1.12h-1.05zM6,7.36h1.05v1.12h-1.05zM10,7.36h1.05v1.12h-1.05zM8,8.42h1.05v1.12h-1.05zM7,9.48h1.05v1.12h-1.05zM10,9.48h1.05v1.12h-1.05zM5,10.54h1.05v1.12h-1.05zM6,10.54h1.05v1.12h-1.05zM7,10.54h1.05v1.12h-1.05z" fill="#4a8ccc"/><path d="M1,3.12h1.05v1.12h-1.05zM3,3.12h1.05v1.12h-1.05zM3,5.24h1.05v1.12h-1.05zM8,5.24h1.05v1.12h-1.05zM1,6.30h1.05v1.12h-1.05zM4,6.30h1.05v1.12h-1.05zM1,7.36h1.05v1.12h-1.05zM3,7.36h1.05v1.12h-1.05zM7,7.36h1.05v1.12h-1.05zM8,7.36h1.05v1.12h-1.05zM2,8.42h1.05v1.12h-1.05zM3,8.42h1.05v1.12h-1.05zM4,8.42h1.05v1.12h-1.05zM5,8.42h1.05v1.12h-1.05zM4,9.48h1.05v1.12h-1.05zM8,9.48h1.05v1.12h-1.05zM1,10.54h1.05v1.12h-1.05zM2,10.54h1.05v1.12h-1.05zM3,10.54h1.05v1.12h-1.05zM4,10.54h1.05v1.12h-1.05zM8,10.54h1.05v1.12h-1.05zM9,10.54h1.05v1.12h-1.05z" fill="#115ea8"/></svg></div><div class="tree" style="left:61.8px;top:319.17px">lowEnergyXYDSSD0</div><svg class="abs" style="left:38px;top:324px" width="10" height="2"><path d="M0.6,1.5H9.2" stroke="#b4b4b4" stroke-width="1"/></svg><div class="abs" style="left:47px;top:334px;width:12px;height:13px"><svg width="12" height="13" shape-rendering="crispEdges"><rect x="0.5" y="0.5" width="11" height="11.6" fill="#dde6ee" stroke="#b5b5b0" stroke-width="0.9"/><path d="M1,1.00h1.05v1.12h-1.05zM5,1.00h1.05v1.12h-1.05zM8,1.00h1.05v1.12h-1.05zM3,2.06h1.05v1.12h-1.05zM7,2.06h1.05v1.12h-1.05zM9,2.06h1.05v1.12h-1.05zM4,3.12h1.05v1.12h-1.05zM10,3.12h1.05v1.12h-1.05zM2,4.18h1.05v1.12h-1.05zM8,4.18h1.05v1.12h-1.05zM10,4.18h1.05v1.12h-1.05zM2,5.24h1.05v1.12h-1.05zM5,5.24h1.05v1.12h-1.05zM7,5.24h1.05v1.12h-1.05zM2,6.30h1.05v1.12h-1.05zM2,7.36h1.05v1.12h-1.05zM9,7.36h1.05v1.12h-1.05zM1,8.42h1.05v1.12h-1.05zM6,8.42h1.05v1.12h-1.05zM7,8.42h1.05v1.12h-1.05zM10,8.42h1.05v1.12h-1.05zM1,9.48h1.05v1.12h-1.05zM2,9.48h1.05v1.12h-1.05zM3,9.48h1.05v1.12h-1.05zM5,9.48h1.05v1.12h-1.05zM6,9.48h1.05v1.12h-1.05zM10,10.54h1.05v1.12h-1.05z" fill="#a8cae8"/><path d="M2,1.00h1.05v1.12h-1.05zM4,1.00h1.05v1.12h-1.05zM6,1.00h1.05v1.12h-1.05zM7,1.00h1.05v1.12h-1.05zM9,1.00h1.05v1.12h-1.05zM10,1.00h1.05v1.12h-1.05zM1,2.06h1.05v1.12h-1.05zM2,2.06h1.05v1.12h-1.05zM5,2.06h1.05v1.12h-1.05zM6,2.06h1.05v1.12h-1.05zM10,2.06h1.05v1.12h-1.05zM2,3.12h1.05v1.12h-1.05zM5,3.12h1.05v1.12h-1.05zM6,3.12h1.05v1.12h-1.05zM7,3.12h1.05v1.12h-1.05zM9,3.12h1.05v1.12h-1.05zM4,4.18h1.05v1.12h-1.05zM5,4.18h1.05v1.12h-1.05zM6,4.18h1.05v1.12h-1.05zM9,4.18h1.05v1.12h-1.05zM10,5.24h1.05v1.12h-1.05zM5,6.30h1.05v1.12h-1.05zM7,6.30h1.05v1.12h-1.05zM9,8.42h1.05v1.12h-1.05zM9,9.48h1.05v1.12h-1.05z" fill="#f4f8fc"/><path d="M3,1.00h1.05v1.12h-1.05zM4,2.06h1.05v1.12h-1.05zM8,2.06h1.05v1.12h-1.05zM8,3.12h1.05v1.12h-1.05zM1,4.18h1.05v1.12h-1.05zM3,4.18h1.05v1.12h-1.05zM7,4.18h1.05v1.12h-1.05zM1,5.24h1.05v1.12h-1.05zM4,5.24h1.05v1.12h-1.05zM6,5.24h1.05v1.12h-1.05zM9,5.24h1.05v1.12h-1.05zM3,6.30h1.05v1.12h-1.05zM6,6.30h1.05v1.12h-1.05zM8,6.30h1.05v1.12h-1.05zM9,6.30h1.05v1.12h-1.05zM10,6.30h1.05v1.12h-1.05zM4,7.36h1.05v1.12h-1.05zM5,7.36h1.05v1.12h-1.05zM6,7.36h1.05v1.12h-1.05zM10,7.36h1.05v1.12h-1.05zM8,8.42h1.05v1.12h-1.05zM7,9.48h1.05v1.12h-1.05zM10,9.48h1.05v1.12h-1.05zM5,10.54h1.05v1.12h-1.05zM6,10.54h1.05v1.12h-1.05zM7,10.54h1.05v1.12h-1.05z" fill="#4a8ccc"/><path d="M1,3.12h1.05v1.12h-1.05zM3,3.12h1.05v1.12h-1.05zM3,5.24h1.05v1.12h-1.05zM8,5.24h1.05v1.12h-1.05zM1,6.30h1.05v1.12h-1.05zM4,6.30h1.05v1.12h-1.05zM1,7.36h1.05v1.12h-1.05zM3,7.36h1.05v1.12h-1.05zM7,7.36h1.05v1.12h-1.05zM8,7.36h1.05v1.12h-1.05zM2,8.42h1.05v1.12h-1.05zM3,8.42h1.05v1.12h-1.05zM4,8.42h1.05v1.12h-1.05zM5,8.42h1.05v1.12h-1.05zM4,9.48h1.05v1.12h-1.05zM8,9.48h1.05v1.12h-1.05zM1,10.54h1.05v1.12h-1.05zM2,10.54h1.05v1.12h-1.05zM3,10.54h1.05v1.12h-1.05zM4,10.54h1.05v1.12h-1.05zM8,10.54h1.05v1.12h-1.05zM9,10.54h1.05v1.12h-1.05z" fill="#115ea8"/></svg></div><div class="tree" style="left:61.8px;top:333.56px">lowEnergyAngleEDSSD0</div><svg class="abs" style="left:38px;top:338px" width="10" height="2"><path d="M0.6,1.5H9.2" stroke="#b4b4b4" stroke-width="1"/></svg><div class="abs" style="left:47px;top:349px;width:12px;height:13px"><svg width="12" height="13"><rect x="0.5" y="0.5" width="11" height="11.6" fill="#fbfbfb" stroke="#b4b4b4" stroke-width="0.9"/><path d="M3,2.2v5M6,2.2v5M9,2.2v5" stroke="#dcdcdc" stroke-width="0.7"/><path d="M1,11.6 V8.6 L2,7.8 L3,4.8 L3.8,8 L5,6.2 L6,8.3 L6.8,5.6 L8,8.6 L9.2,7 L10,9 L11,9.6 V11.6 Z" fill="#a8a8a8"/><path d="M1,8.6 L2,7.8 L3,4.8 L3.8,8 L5,6.2 L6,8.3 L6.8,5.6 L8,8.6 L9.2,7 L10,9 L11,9.6" fill="none" stroke="#555" stroke-width="0.6"/></svg></div><div class="tree" style="left:61.8px;top:347.96px">lowEnergyEyTotalDSSD0</div><svg class="abs" style="left:38px;top:353px" width="10" height="2"><path d="M0.6,1.5H9.2" stroke="#b4b4b4" stroke-width="1"/></svg><div class="abs" style="left:47px;top:363px;width:12px;height:13px"><svg width="12" height="13"><rect x="0.5" y="0.5" width="11" height="11.6" fill="#fbfbfb" stroke="#b4b4b4" stroke-width="0.9"/><path d="M3,2.2v5M6,2.2v5M9,2.2v5" stroke="#dcdcdc" stroke-width="0.7"/><path d="M1,11.6 V8.6 L2,7.8 L3,4.8 L3.8,8 L5,6.2 L6,8.3 L6.8,5.6 L8,8.6 L9.2,7 L10,9 L11,9.6 V11.6 Z" fill="#a8a8a8"/><path d="M1,8.6 L2,7.8 L3,4.8 L3.8,8 L5,6.2 L6,8.3 L6.8,5.6 L8,8.6 L9.2,7 L10,9 L11,9.6" fill="none" stroke="#555" stroke-width="0.6"/></svg></div><div class="tree" style="left:61.8px;top:362.36px">lowEnergyExTotalDSSD0</div><svg class="abs" style="left:38px;top:367px" width="10" height="2"><path d="M0.6,1.5H9.2" stroke="#b4b4b4" stroke-width="1"/></svg><div class="abs" style="left:47px;top:378px;width:12px;height:13px"><svg width="12" height="13"><rect x="0.5" y="0.5" width="11" height="11.6" fill="#fbfbfb" stroke="#b4b4b4" stroke-width="0.9"/><path d="M3,2.2v5M6,2.2v5M9,2.2v5" stroke="#dcdcdc" stroke-width="0.7"/><path d="M1,11.6 V8.6 L2,7.8 L3,4.8 L3.8,8 L5,6.2 L6,8.3 L6.8,5.6 L8,8.6 L9.2,7 L10,9 L11,9.6 V11.6 Z" fill="#a8a8a8"/><path d="M1,8.6 L2,7.8 L3,4.8 L3.8,8 L5,6.2 L6,8.3 L6.8,5.6 L8,8.6 L9.2,7 L10,9 L11,9.6" fill="none" stroke="#555" stroke-width="0.6"/></svg></div><div class="tree" style="left:61.8px;top:376.75px">lowEnergyEyRateDSSD0</div><svg class="abs" style="left:38px;top:381px" width="10" height="2"><path d="M0.6,1.5H9.2" stroke="#b4b4b4" stroke-width="1"/></svg><div class="abs" style="left:47px;top:392px;width:12px;height:13px"><svg width="12" height="13"><rect x="0.5" y="0.5" width="11" height="11.6" fill="#fbfbfb" stroke="#b4b4b4" stroke-width="0.9"/><path d="M3,2.2v5M6,2.2v5M9,2.2v5" stroke="#dcdcdc" stroke-width="0.7"/><path d="M1,11.6 V8.6 L2,7.8 L3,4.8 L3.8,8 L5,6.2 L6,8.3 L6.8,5.6 L8,8.6 L9.2,7 L10,9 L11,9.6 V11.6 Z" fill="#a8a8a8"/><path d="M1,8.6 L2,7.8 L3,4.8 L3.8,8 L5,6.2 L6,8.3 L6.8,5.6 L8,8.6 L9.2,7 L10,9 L11,9.6" fill="none" stroke="#555" stroke-width="0.6"/></svg></div><div class="tree" style="left:61.8px;top:391.14px">lowEnergyExRateDSSD0</div><svg class="abs" style="left:38px;top:396px" width="10" height="2"><path d="M0.6,1.5H9.2" stroke="#b4b4b4" stroke-width="1"/></svg><div class="abs" style="left:47px;top:406px;width:12px;height:13px"><svg width="12" height="13" shape-rendering="crispEdges"><rect x="0.5" y="0.5" width="11" height="11.6" fill="#dde6ee" stroke="#b5b5b0" stroke-width="0.9"/><path d="M1,1.00h1.05v1.12h-1.05zM5,1.00h1.05v1.12h-1.05zM8,1.00h1.05v1.12h-1.05zM3,2.06h1.05v1.12h-1.05zM7,2.06h1.05v1.12h-1.05zM9,2.06h1.05v1.12h-1.05zM4,3.12h1.05v1.12h-1.05zM10,3.12h1.05v1.12h-1.05zM2,4.18h1.05v1.12h-1.05zM8,4.18h1.05v1.12h-1.05zM10,4.18h1.05v1.12h-1.05zM2,5.24h1.05v1.12h-1.05zM5,5.24h1.05v1.12h-1.05zM7,5.24h1.05v1.12h-1.05zM2,6.30h1.05v1.12h-1.05zM2,7.36h1.05v1.12h-1.05zM9,7.36h1.05v1.12h-1.05zM1,8.42h1.05v1.12h-1.05zM6,8.42h1.05v1.12h-1.05zM7,8.42h1.05v1.12h-1.05zM10,8.42h1.05v1.12h-1.05zM1,9.48h1.05v1.12h-1.05zM2,9.48h1.05v1.12h-1.05zM3,9.48h1.05v1.12h-1.05zM5,9.48h1.05v1.12h-1.05zM6,9.48h1.05v1.12h-1.05zM10,10.54h1.05v1.12h-1.05z" fill="#a8cae8"/><path d="M2,1.00h1.05v1.12h-1.05zM4,1.00h1.05v1.12h-1.05zM6,1.00h1.05v1.12h-1.05zM7,1.00h1.05v1.12h-1.05zM9,1.00h1.05v1.12h-1.05zM10,1.00h1.05v1.12h-1.05zM1,2.06h1.05v1.12h-1.05zM2,2.06h1.05v1.12h-1.05zM5,2.06h1.05v1.12h-1.05zM6,2.06h1.05v1.12h-1.05zM10,2.06h1.05v1.12h-1.05zM2,3.12h1.05v1.12h-1.05zM5,3.12h1.05v1.12h-1.05zM6,3.12h1.05v1.12h-1.05zM7,3.12h1.05v1.12h-1.05zM9,3.12h1.05v1.12h-1.05zM4,4.18h1.05v1.12h-1.05zM5,4.18h1.05v1.12h-1.05zM6,4.18h1.05v1.12h-1.05zM9,4.18h1.05v1.12h-1.05zM10,5.24h1.05v1.12h-1.05zM5,6.30h1.05v1.12h-1.05zM7,6.30h1.05v1.12h-1.05zM9,8.42h1.05v1.12h-1.05zM9,9.48h1.05v1.12h-1.05z" fill="#f4f8fc"/><path d="M3,1.00h1.05v1.12h-1.05zM4,2.06h1.05v1.12h-1.05zM8,2.06h1.05v1.12h-1.05zM8,3.12h1.05v1.12h-1.05zM1,4.18h1.05v1.12h-1.05zM3,4.18h1.05v1.12h-1.05zM7,4.18h1.05v1.12h-1.05zM1,5.24h1.05v1.12h-1.05zM4,5.24h1.05v1.12h-1.05zM6,5.24h1.05v1.12h-1.05zM9,5.24h1.05v1.12h-1.05zM3,6.30h1.05v1.12h-1.05zM6,6.30h1.05v1.12h-1.05zM8,6.30h1.05v1.12h-1.05zM9,6.30h1.05v1.12h-1.05zM10,6.30h1.05v1.12h-1.05zM4,7.36h1.05v1.12h-1.05zM5,7.36h1.05v1.12h-1.05zM6,7.36h1.05v1.12h-1.05zM10,7.36h1.05v1.12h-1.05zM8,8.42h1.05v1.12h-1.05zM7,9.48h1.05v1.12h-1.05zM10,9.48h1.05v1.12h-1.05zM5,10.54h1.05v1.12h-1.05zM6,10.54h1.05v1.12h-1.05zM7,10.54h1.05v1.12h-1.05z" fill="#4a8ccc"/><path d="M1,3.12h1.05v1.12h-1.05zM3,3.12h1.05v1.12h-1.05zM3,5.24h1.05v1.12h-1.05zM8,5.24h1.05v1.12h-1.05zM1,6.30h1.05v1.12h-1.05zM4,6.30h1.05v1.12h-1.05zM1,7.36h1.05v1.12h-1.05zM3,7.36h1.05v1.12h-1.05zM7,7.36h1.05v1.12h-1.05zM8,7.36h1.05v1.12h-1.05zM2,8.42h1.05v1.12h-1.05zM3,8.42h1.05v1.12h-1.05zM4,8.42h1.05v1.12h-1.05zM5,8.42h1.05v1.12h-1.05zM4,9.48h1.05v1.12h-1.05zM8,9.48h1.05v1.12h-1.05zM1,10.54h1.05v1.12h-1.05zM2,10.54h1.05v1.12h-1.05zM3,10.54h1.05v1.12h-1.05zM4,10.54h1.05v1.12h-1.05zM8,10.54h1.05v1.12h-1.05zM9,10.54h1.05v1.12h-1.05z" fill="#115ea8"/></svg></div><div class="tree" style="left:61.8px;top:405.54px">lowEnergyExEyDSSD1</div><svg class="abs" style="left:38px;top:410px" width="10" height="2"><path d="M0.6,1.5H9.2" stroke="#b4b4b4" stroke-width="1"/></svg><div class="abs" style="left:47px;top:421px;width:12px;height:13px"><svg width="12" height="13" shape-rendering="crispEdges"><rect x="0.5" y="0.5" width="11" height="11.6" fill="#dde6ee" stroke="#b5b5b0" stroke-width="0.9"/><path d="M1,1.00h1.05v1.12h-1.05zM5,1.00h1.05v1.12h-1.05zM8,1.00h1.05v1.12h-1.05zM3,2.06h1.05v1.12h-1.05zM7,2.06h1.05v1.12h-1.05zM9,2.06h1.05v1.12h-1.05zM4,3.12h1.05v1.12h-1.05zM10,3.12h1.05v1.12h-1.05zM2,4.18h1.05v1.12h-1.05zM8,4.18h1.05v1.12h-1.05zM10,4.18h1.05v1.12h-1.05zM2,5.24h1.05v1.12h-1.05zM5,5.24h1.05v1.12h-1.05zM7,5.24h1.05v1.12h-1.05zM2,6.30h1.05v1.12h-1.05zM2,7.36h1.05v1.12h-1.05zM9,7.36h1.05v1.12h-1.05zM1,8.42h1.05v1.12h-1.05zM6,8.42h1.05v1.12h-1.05zM7,8.42h1.05v1.12h-1.05zM10,8.42h1.05v1.12h-1.05zM1,9.48h1.05v1.12h-1.05zM2,9.48h1.05v1.12h-1.05zM3,9.48h1.05v1.12h-1.05zM5,9.48h1.05v1.12h-1.05zM6,9.48h1.05v1.12h-1.05zM10,10.54h1.05v1.12h-1.05z" fill="#a8cae8"/><path d="M2,1.00h1.05v1.12h-1.05zM4,1.00h1.05v1.12h-1.05zM6,1.00h1.05v1.12h-1.05zM7,1.00h1.05v1.12h-1.05zM9,1.00h1.05v1.12h-1.05zM10,1.00h1.05v1.12h-1.05zM1,2.06h1.05v1.12h-1.05zM2,2.06h1.05v1.12h-1.05zM5,2.06h1.05v1.12h-1.05zM6,2.06h1.05v1.12h-1.05zM10,2.06h1.05v1.12h-1.05zM2,3.12h1.05v1.12h-1.05zM5,3.12h1.05v1.12h-1.05zM6,3.12h1.05v1.12h-1.05zM7,3.12h1.05v1.12h-1.05zM9,3.12h1.05v1.12h-1.05zM4,4.18h1.05v1.12h-1.05zM5,4.18h1.05v1.12h-1.05zM6,4.18h1.05v1.12h-1.05zM9,4.18h1.05v1.12h-1.05zM10,5.24h1.05v1.12h-1.05zM5,6.30h1.05v1.12h-1.05zM7,6.30h1.05v1.12h-1.05zM9,8.42h1.05v1.12h-1.05zM9,9.48h1.05v1.12h-1.05z" fill="#f4f8fc"/><path d="M3,1.00h1.05v1.12h-1.05zM4,2.06h1.05v1.12h-1.05zM8,2.06h1.05v1.12h-1.05zM8,3.12h1.05v1.12h-1.05zM1,4.18h1.05v1.12h-1.05zM3,4.18h1.05v1.12h-1.05zM7,4.18h1.05v1.12h-1.05zM1,5.24h1.05v1.12h-1.05zM4,5.24h1.05v1.12h-1.05zM6,5.24h1.05v1.12h-1.05zM9,5.24h1.05v1.12h-1.05zM3,6.30h1.05v1.12h-1.05zM6,6.30h1.05v1.12h-1.05zM8,6.30h1.05v1.12h-1.05zM9,6.30h1.05v1.12h-1.05zM10,6.30h1.05v1.12h-1.05zM4,7.36h1.05v1.12h-1.05zM5,7.36h1.05v1.12h-1.05zM6,7.36h1.05v1.12h-1.05zM10,7.36h1.05v1.12h-1.05zM8,8.42h1.05v1.12h-1.05zM7,9.48h1.05v1.12h-1.05zM10,9.48h1.05v1.12h-1.05zM5,10.54h1.05v1.12h-1.05zM6,10.54h1.05v1.12h-1.05zM7,10.54h1.05v1.12h-1.05z" fill="#4a8ccc"/><path d="M1,3.12h1.05v1.12h-1.05zM3,3.12h1.05v1.12h-1.05zM3,5.24h1.05v1.12h-1.05zM8,5.24h1.05v1.12h-1.05zM1,6.30h1.05v1.12h-1.05zM4,6.30h1.05v1.12h-1.05zM1,7.36h1.05v1.12h-1.05zM3,7.36h1.05v1.12h-1.05zM7,7.36h1.05v1.12h-1.05zM8,7.36h1.05v1.12h-1.05zM2,8.42h1.05v1.12h-1.05zM3,8.42h1.05v1.12h-1.05zM4,8.42h1.05v1.12h-1.05zM5,8.42h1.05v1.12h-1.05zM4,9.48h1.05v1.12h-1.05zM8,9.48h1.05v1.12h-1.05zM1,10.54h1.05v1.12h-1.05zM2,10.54h1.05v1.12h-1.05zM3,10.54h1.05v1.12h-1.05zM4,10.54h1.05v1.12h-1.05zM8,10.54h1.05v1.12h-1.05zM9,10.54h1.05v1.12h-1.05z" fill="#115ea8"/></svg></div><div class="tree" style="left:61.8px;top:419.93px">xyMultiplicityDSSD1</div><svg class="abs" style="left:38px;top:425px" width="10" height="2"><path d="M0.6,1.5H9.2" stroke="#b4b4b4" stroke-width="1"/></svg><div class="abs" style="left:47px;top:435px;width:12px;height:13px"><svg width="12" height="13" shape-rendering="crispEdges"><rect x="0.5" y="0.5" width="11" height="11.6" fill="#dde6ee" stroke="#b5b5b0" stroke-width="0.9"/><path d="M1,1.00h1.05v1.12h-1.05zM5,1.00h1.05v1.12h-1.05zM8,1.00h1.05v1.12h-1.05zM3,2.06h1.05v1.12h-1.05zM7,2.06h1.05v1.12h-1.05zM9,2.06h1.05v1.12h-1.05zM4,3.12h1.05v1.12h-1.05zM10,3.12h1.05v1.12h-1.05zM2,4.18h1.05v1.12h-1.05zM8,4.18h1.05v1.12h-1.05zM10,4.18h1.05v1.12h-1.05zM2,5.24h1.05v1.12h-1.05zM5,5.24h1.05v1.12h-1.05zM7,5.24h1.05v1.12h-1.05zM2,6.30h1.05v1.12h-1.05zM2,7.36h1.05v1.12h-1.05zM9,7.36h1.05v1.12h-1.05zM1,8.42h1.05v1.12h-1.05zM6,8.42h1.05v1.12h-1.05zM7,8.42h1.05v1.12h-1.05zM10,8.42h1.05v1.12h-1.05zM1,9.48h1.05v1.12h-1.05zM2,9.48h1.05v1.12h-1.05zM3,9.48h1.05v1.12h-1.05zM5,9.48h1.05v1.12h-1.05zM6,9.48h1.05v1.12h-1.05zM10,10.54h1.05v1.12h-1.05z" fill="#a8cae8"/><path d="M2,1.00h1.05v1.12h-1.05zM4,1.00h1.05v1.12h-1.05zM6,1.00h1.05v1.12h-1.05zM7,1.00h1.05v1.12h-1.05zM9,1.00h1.05v1.12h-1.05zM10,1.00h1.05v1.12h-1.05zM1,2.06h1.05v1.12h-1.05zM2,2.06h1.05v1.12h-1.05zM5,2.06h1.05v1.12h-1.05zM6,2.06h1.05v1.12h-1.05zM10,2.06h1.05v1.12h-1.05zM2,3.12h1.05v1.12h-1.05zM5,3.12h1.05v1.12h-1.05zM6,3.12h1.05v1.12h-1.05zM7,3.12h1.05v1.12h-1.05zM9,3.12h1.05v1.12h-1.05zM4,4.18h1.05v1.12h-1.05zM5,4.18h1.05v1.12h-1.05zM6,4.18h1.05v1.12h-1.05zM9,4.18h1.05v1.12h-1.05zM10,5.24h1.05v1.12h-1.05zM5,6.30h1.05v1.12h-1.05zM7,6.30h1.05v1.12h-1.05zM9,8.42h1.05v1.12h-1.05zM9,9.48h1.05v1.12h-1.05z" fill="#f4f8fc"/><path d="M3,1.00h1.05v1.12h-1.05zM4,2.06h1.05v1.12h-1.05zM8,2.06h1.05v1.12h-1.05zM8,3.12h1.05v1.12h-1.05zM1,4.18h1.05v1.12h-1.05zM3,4.18h1.05v1.12h-1.05zM7,4.18h1.05v1.12h-1.05zM1,5.24h1.05v1.12h-1.05zM4,5.24h1.05v1.12h-1.05zM6,5.24h1.05v1.12h-1.05zM9,5.24h1.05v1.12h-1.05zM3,6.30h1.05v1.12h-1.05zM6,6.30h1.05v1.12h-1.05zM8,6.30h1.05v1.12h-1.05zM9,6.30h1.05v1.12h-1.05zM10,6.30h1.05v1.12h-1.05zM4,7.36h1.05v1.12h-1.05zM5,7.36h1.05v1.12h-1.05zM6,7.36h1.05v1.12h-1.05zM10,7.36h1.05v1.12h-1.05zM8,8.42h1.05v1.12h-1.05zM7,9.48h1.05v1.12h-1.05zM10,9.48h1.05v1.12h-1.05zM5,10.54h1.05v1.12h-1.05zM6,10.54h1.05v1.12h-1.05zM7,10.54h1.05v1.12h-1.05z" fill="#4a8ccc"/><path d="M1,3.12h1.05v1.12h-1.05zM3,3.12h1.05v1.12h-1.05zM3,5.24h1.05v1.12h-1.05zM8,5.24h1.05v1.12h-1.05zM1,6.30h1.05v1.12h-1.05zM4,6.30h1.05v1.12h-1.05zM1,7.36h1.05v1.12h-1.05zM3,7.36h1.05v1.12h-1.05zM7,7.36h1.05v1.12h-1.05zM8,7.36h1.05v1.12h-1.05zM2,8.42h1.05v1.12h-1.05zM3,8.42h1.05v1.12h-1.05zM4,8.42h1.05v1.12h-1.05zM5,8.42h1.05v1.12h-1.05zM4,9.48h1.05v1.12h-1.05zM8,9.48h1.05v1.12h-1.05zM1,10.54h1.05v1.12h-1.05zM2,10.54h1.05v1.12h-1.05zM3,10.54h1.05v1.12h-1.05zM4,10.54h1.05v1.12h-1.05zM8,10.54h1.05v1.12h-1.05zM9,10.54h1.05v1.12h-1.05z" fill="#115ea8"/></svg></div><div class="tree" style="left:61.8px;top:434.33px">lowEnergyXYDSSD1</div><svg class="abs" style="left:38px;top:439px" width="10" height="2"><path d="M0.6,1.5H9.2" stroke="#b4b4b4" stroke-width="1"/></svg><div class="abs" style="left:47px;top:450px;width:12px;height:13px"><svg width="12" height="13" shape-rendering="crispEdges"><rect x="0.5" y="0.5" width="11" height="11.6" fill="#dde6ee" stroke="#b5b5b0" stroke-width="0.9"/><path d="M1,1.00h1.05v1.12h-1.05zM5,1.00h1.05v1.12h-1.05zM8,1.00h1.05v1.12h-1.05zM3,2.06h1.05v1.12h-1.05zM7,2.06h1.05v1.12h-1.05zM9,2.06h1.05v1.12h-1.05zM4,3.12h1.05v1.12h-1.05zM10,3.12h1.05v1.12h-1.05zM2,4.18h1.05v1.12h-1.05zM8,4.18h1.05v1.12h-1.05zM10,4.18h1.05v1.12h-1.05zM2,5.24h1.05v1.12h-1.05zM5,5.24h1.05v1.12h-1.05zM7,5.24h1.05v1.12h-1.05zM2,6.30h1.05v1.12h-1.05zM2,7.36h1.05v1.12h-1.05zM9,7.36h1.05v1.12h-1.05zM1,8.42h1.05v1.12h-1.05zM6,8.42h1.05v1.12h-1.05zM7,8.42h1.05v1.12h-1.05zM10,8.42h1.05v1.12h-1.05zM1,9.48h1.05v1.12h-1.05zM2,9.48h1.05v1.12h-1.05zM3,9.48h1.05v1.12h-1.05zM5,9.48h1.05v1.12h-1.05zM6,9.48h1.05v1.12h-1.05zM10,10.54h1.05v1.12h-1.05z" fill="#a8cae8"/><path d="M2,1.00h1.05v1.12h-1.05zM4,1.00h1.05v1.12h-1.05zM6,1.00h1.05v1.12h-1.05zM7,1.00h1.05v1.12h-1.05zM9,1.00h1.05v1.12h-1.05zM10,1.00h1.05v1.12h-1.05zM1,2.06h1.05v1.12h-1.05zM2,2.06h1.05v1.12h-1.05zM5,2.06h1.05v1.12h-1.05zM6,2.06h1.05v1.12h-1.05zM10,2.06h1.05v1.12h-1.05zM2,3.12h1.05v1.12h-1.05zM5,3.12h1.05v1.12h-1.05zM6,3.12h1.05v1.12h-1.05zM7,3.12h1.05v1.12h-1.05zM9,3.12h1.05v1.12h-1.05zM4,4.18h1.05v1.12h-1.05zM5,4.18h1.05v1.12h-1.05zM6,4.18h1.05v1.12h-1.05zM9,4.18h1.05v1.12h-1.05zM10,5.24h1.05v1.12h-1.05zM5,6.30h1.05v1.12h-1.05zM7,6.30h1.05v1.12h-1.05zM9,8.42h1.05v1.12h-1.05zM9,9.48h1.05v1.12h-1.05z" fill="#f4f8fc"/><path d="M3,1.00h1.05v1.12h-1.05zM4,2.06h1.05v1.12h-1.05zM8,2.06h1.05v1.12h-1.05zM8,3.12h1.05v1.12h-1.05zM1,4.18h1.05v1.12h-1.05zM3,4.18h1.05v1.12h-1.05zM7,4.18h1.05v1.12h-1.05zM1,5.24h1.05v1.12h-1.05zM4,5.24h1.05v1.12h-1.05zM6,5.24h1.05v1.12h-1.05zM9,5.24h1.05v1.12h-1.05zM3,6.30h1.05v1.12h-1.05zM6,6.30h1.05v1.12h-1.05zM8,6.30h1.05v1.12h-1.05zM9,6.30h1.05v1.12h-1.05zM10,6.30h1.05v1.12h-1.05zM4,7.36h1.05v1.12h-1.05zM5,7.36h1.05v1.12h-1.05zM6,7.36h1.05v1.12h-1.05zM10,7.36h1.05v1.12h-1.05zM8,8.42h1.05v1.12h-1.05zM7,9.48h1.05v1.12h-1.05zM10,9.48h1.05v1.12h-1.05zM5,10.54h1.05v1.12h-1.05zM6,10.54h1.05v1.12h-1.05zM7,10.54h1.05v1.12h-1.05z" fill="#4a8ccc"/><path d="M1,3.12h1.05v1.12h-1.05zM3,3.12h1.05v1.12h-1.05zM3,5.24h1.05v1.12h-1.05zM8,5.24h1.05v1.12h-1.05zM1,6.30h1.05v1.12h-1.05zM4,6.30h1.05v1.12h-1.05zM1,7.36h1.05v1.12h-1.05zM3,7.36h1.05v1.12h-1.05zM7,7.36h1.05v1.12h-1.05zM8,7.36h1.05v1.12h-1.05zM2,8.42h1.05v1.12h-1.05zM3,8.42h1.05v1.12h-1.05zM4,8.42h1.05v1.12h-1.05zM5,8.42h1.05v1.12h-1.05zM4,9.48h1.05v1.12h-1.05zM8,9.48h1.05v1.12h-1.05zM1,10.54h1.05v1.12h-1.05zM2,10.54h1.05v1.12h-1.05zM3,10.54h1.05v1.12h-1.05zM4,10.54h1.05v1.12h-1.05zM8,10.54h1.05v1.12h-1.05zM9,10.54h1.05v1.12h-1.05z" fill="#115ea8"/></svg></div><div class="tree" style="left:61.8px;top:448.72px">lowEnergyAngleEDSSD1</div><svg class="abs" style="left:38px;top:453px" width="10" height="2"><path d="M0.6,1.5H9.2" stroke="#b4b4b4" stroke-width="1"/></svg><div class="abs" style="left:47px;top:464px;width:12px;height:13px"><svg width="12" height="13"><rect x="0.5" y="0.5" width="11" height="11.6" fill="#fbfbfb" stroke="#b4b4b4" stroke-width="0.9"/><path d="M3,2.2v5M6,2.2v5M9,2.2v5" stroke="#dcdcdc" stroke-width="0.7"/><path d="M1,11.6 V8.6 L2,7.8 L3,4.8 L3.8,8 L5,6.2 L6,8.3 L6.8,5.6 L8,8.6 L9.2,7 L10,9 L11,9.6 V11.6 Z" fill="#a8a8a8"/><path d="M1,8.6 L2,7.8 L3,4.8 L3.8,8 L5,6.2 L6,8.3 L6.8,5.6 L8,8.6 L9.2,7 L10,9 L11,9.6" fill="none" stroke="#555" stroke-width="0.6"/></svg></div><div class="tree" style="left:61.8px;top:463.12px">lowEnergyEyTotalDSSD1</div><svg class="abs" style="left:38px;top:468px" width="10" height="2"><path d="M0.6,1.5H9.2" stroke="#b4b4b4" stroke-width="1"/></svg><div class="abs" style="left:47px;top:478px;width:12px;height:13px"><svg width="12" height="13"><rect x="0.5" y="0.5" width="11" height="11.6" fill="#fbfbfb" stroke="#b4b4b4" stroke-width="0.9"/><path d="M3,2.2v5M6,2.2v5M9,2.2v5" stroke="#dcdcdc" stroke-width="0.7"/><path d="M1,11.6 V8.6 L2,7.8 L3,4.8 L3.8,8 L5,6.2 L6,8.3 L6.8,5.6 L8,8.6 L9.2,7 L10,9 L11,9.6 V11.6 Z" fill="#a8a8a8"/><path d="M1,8.6 L2,7.8 L3,4.8 L3.8,8 L5,6.2 L6,8.3 L6.8,5.6 L8,8.6 L9.2,7 L10,9 L11,9.6" fill="none" stroke="#555" stroke-width="0.6"/></svg></div><div class="tree" style="left:61.8px;top:477.51px">lowEnergyExTotalDSSD1</div><svg class="abs" style="left:38px;top:482px" width="10" height="2"><path d="M0.6,1.5H9.2" stroke="#b4b4b4" stroke-width="1"/></svg><div class="abs" style="left:47px;top:493px;width:12px;height:13px"><svg width="12" height="13"><rect x="0.5" y="0.5" width="11" height="11.6" fill="#fbfbfb" stroke="#b4b4b4" stroke-width="0.9"/><path d="M3,2.2v5M6,2.2v5M9,2.2v5" stroke="#dcdcdc" stroke-width="0.7"/><path d="M1,11.6 V8.6 L2,7.8 L3,4.8 L3.8,8 L5,6.2 L6,8.3 L6.8,5.6 L8,8.6 L9.2,7 L10,9 L11,9.6 V11.6 Z" fill="#a8a8a8"/><path d="M1,8.6 L2,7.8 L3,4.8 L3.8,8 L5,6.2 L6,8.3 L6.8,5.6 L8,8.6 L9.2,7 L10,9 L11,9.6" fill="none" stroke="#555" stroke-width="0.6"/></svg></div><div class="tree" style="left:61.8px;top:491.91px">lowEnergyEyRateDSSD1</div><svg class="abs" style="left:38px;top:497px" width="10" height="2"><path d="M0.6,1.5H9.2" stroke="#b4b4b4" stroke-width="1"/></svg><div class="abs" style="left:47px;top:507px;width:12px;height:13px"><svg width="12" height="13"><rect x="0.5" y="0.5" width="11" height="11.6" fill="#fbfbfb" stroke="#b4b4b4" stroke-width="0.9"/><path d="M3,2.2v5M6,2.2v5M9,2.2v5" stroke="#dcdcdc" stroke-width="0.7"/><path d="M1,11.6 V8.6 L2,7.8 L3,4.8 L3.8,8 L5,6.2 L6,8.3 L6.8,5.6 L8,8.6 L9.2,7 L10,9 L11,9.6 V11.6 Z" fill="#a8a8a8"/><path d="M1,8.6 L2,7.8 L3,4.8 L3.8,8 L5,6.2 L6,8.3 L6.8,5.6 L8,8.6 L9.2,7 L10,9 L11,9.6" fill="none" stroke="#555" stroke-width="0.6"/></svg></div><div class="tree" style="left:61.8px;top:506.3px">lowEnergyExRateDSSD1</div><svg class="abs" style="left:38px;top:511px" width="10" height="2"><path d="M0.6,1.5H9.2" stroke="#b4b4b4" stroke-width="1"/></svg><div class="abs" style="left:47px;top:522px;width:12px;height:13px"><svg width="12" height="13" shape-rendering="crispEdges"><rect x="0.5" y="0.5" width="11" height="11.6" fill="#dde6ee" stroke="#b5b5b0" stroke-width="0.9"/><path d="M1,1.00h1.05v1.12h-1.05zM5,1.00h1.05v1.12h-1.05zM8,1.00h1.05v1.12h-1.05zM3,2.06h1.05v1.12h-1.05zM7,2.06h1.05v1.12h-1.05zM9,2.06h1.05v1.12h-1.05zM4,3.12h1.05v1.12h-1.05zM10,3.12h1.05v1.12h-1.05zM2,4.18h1.05v1.12h-1.05zM8,4.18h1.05v1.12h-1.05zM10,4.18h1.05v1.12h-1.05zM2,5.24h1.05v1.12h-1.05zM5,5.24h1.05v1.12h-1.05zM7,5.24h1.05v1.12h-1.05zM2,6.30h1.05v1.12h-1.05zM2,7.36h1.05v1.12h-1.05zM9,7.36h1.05v1.12h-1.05zM1,8.42h1.05v1.12h-1.05zM6,8.42h1.05v1.12h-1.05zM7,8.42h1.05v1.12h-1.05zM10,8.42h1.05v1.12h-1.05zM1,9.48h1.05v1.12h-1.05zM2,9.48h1.05v1.12h-1.05zM3,9.48h1.05v1.12h-1.05zM5,9.48h1.05v1.12h-1.05zM6,9.48h1.05v1.12h-1.05zM10,10.54h1.05v1.12h-1.05z" fill="#a8cae8"/><path d="M2,1.00h1.05v1.12h-1.05zM4,1.00h1.05v1.12h-1.05zM6,1.00h1.05v1.12h-1.05zM7,1.00h1.05v1.12h-1.05zM9,1.00h1.05v1.12h-1.05zM10,1.00h1.05v1.12h-1.05zM1,2.06h1.05v1.12h-1.05zM2,2.06h1.05v1.12h-1.05zM5,2.06h1.05v1.12h-1.05zM6,2.06h1.05v1.12h-1.05zM10,2.06h1.05v1.12h-1.05zM2,3.12h1.05v1.12h-1.05zM5,3.12h1.05v1.12h-1.05zM6,3.12h1.05v1.12h-1.05zM7,3.12h1.05v1.12h-1.05zM9,3.12h1.05v1.12h-1.05zM4,4.18h1.05v1.12h-1.05zM5,4.18h1.05v1.12h-1.05zM6,4.18h1.05v1.12h-1.05zM9,4.18h1.05v1.12h-1.05zM10,5.24h1.05v1.12h-1.05zM5,6.30h1.05v1.12h-1.05zM7,6.30h1.05v1.12h-1.05zM9,8.42h1.05v1.12h-1.05zM9,9.48h1.05v1.12h-1.05z" fill="#f4f8fc"/><path d="M3,1.00h1.05v1.12h-1.05zM4,2.06h1.05v1.12h-1.05zM8,2.06h1.05v1.12h-1.05zM8,3.12h1.05v1.12h-1.05zM1,4.18h1.05v1.12h-1.05zM3,4.18h1.05v1.12h-1.05zM7,4.18h1.05v1.12h-1.05zM1,5.24h1.05v1.12h-1.05zM4,5.24h1.05v1.12h-1.05zM6,5.24h1.05v1.12h-1.05zM9,5.24h1.05v1.12h-1.05zM3,6.30h1.05v1.12h-1.05zM6,6.30h1.05v1.12h-1.05zM8,6.30h1.05v1.12h-1.05zM9,6.30h1.05v1.12h-1.05zM10,6.30h1.05v1.12h-1.05zM4,7.36h1.05v1.12h-1.05zM5,7.36h1.05v1.12h-1.05zM6,7.36h1.05v1.12h-1.05zM10,7.36h1.05v1.12h-1.05zM8,8.42h1.05v1.12h-1.05zM7,9.48h1.05v1.12h-1.05zM10,9.48h1.05v1.12h-1.05zM5,10.54h1.05v1.12h-1.05zM6,10.54h1.05v1.12h-1.05zM7,10.54h1.05v1.12h-1.05z" fill="#4a8ccc"/><path d="M1,3.12h1.05v1.12h-1.05zM3,3.12h1.05v1.12h-1.05zM3,5.24h1.05v1.12h-1.05zM8,5.24h1.05v1.12h-1.05zM1,6.30h1.05v1.12h-1.05zM4,6.30h1.05v1.12h-1.05zM1,7.36h1.05v1.12h-1.05zM3,7.36h1.05v1.12h-1.05zM7,7.36h1.05v1.12h-1.05zM8,7.36h1.05v1.12h-1.05zM2,8.42h1.05v1.12h-1.05zM3,8.42h1.05v1.12h-1.05zM4,8.42h1.05v1.12h-1.05zM5,8.42h1.05v1.12h-1.05zM4,9.48h1.05v1.12h-1.05zM8,9.48h1.05v1.12h-1.05zM1,10.54h1.05v1.12h-1.05zM2,10.54h1.05v1.12h-1.05zM3,10.54h1.05v1.12h-1.05zM4,10.54h1.05v1.12h-1.05zM8,10.54h1.05v1.12h-1.05zM9,10.54h1.05v1.12h-1.05z" fill="#115ea8"/></svg></div><div class="tree" style="left:61.8px;top:520.7px">lowEnergyExEyDSSD2</div><svg class="abs" style="left:38px;top:525px" width="10" height="2"><path d="M0.6,1.5H9.2" stroke="#b4b4b4" stroke-width="1"/></svg><div class="abs" style="left:47px;top:536px;width:12px;height:13px"><svg width="12" height="13" shape-rendering="crispEdges"><rect x="0.5" y="0.5" width="11" height="11.6" fill="#dde6ee" stroke="#b5b5b0" stroke-width="0.9"/><path d="M1,1.00h1.05v1.12h-1.05zM5,1.00h1.05v1.12h-1.05zM8,1.00h1.05v1.12h-1.05zM3,2.06h1.05v1.12h-1.05zM7,2.06h1.05v1.12h-1.05zM9,2.06h1.05v1.12h-1.05zM4,3.12h1.05v1.12h-1.05zM10,3.12h1.05v1.12h-1.05zM2,4.18h1.05v1.12h-1.05zM8,4.18h1.05v1.12h-1.05zM10,4.18h1.05v1.12h-1.05zM2,5.24h1.05v1.12h-1.05zM5,5.24h1.05v1.12h-1.05zM7,5.24h1.05v1.12h-1.05zM2,6.30h1.05v1.12h-1.05zM2,7.36h1.05v1.12h-1.05zM9,7.36h1.05v1.12h-1.05zM1,8.42h1.05v1.12h-1.05zM6,8.42h1.05v1.12h-1.05zM7,8.42h1.05v1.12h-1.05zM10,8.42h1.05v1.12h-1.05zM1,9.48h1.05v1.12h-1.05zM2,9.48h1.05v1.12h-1.05zM3,9.48h1.05v1.12h-1.05zM5,9.48h1.05v1.12h-1.05zM6,9.48h1.05v1.12h-1.05zM10,10.54h1.05v1.12h-1.05z" fill="#a8cae8"/><path d="M2,1.00h1.05v1.12h-1.05zM4,1.00h1.05v1.12h-1.05zM6,1.00h1.05v1.12h-1.05zM7,1.00h1.05v1.12h-1.05zM9,1.00h1.05v1.12h-1.05zM10,1.00h1.05v1.12h-1.05zM1,2.06h1.05v1.12h-1.05zM2,2.06h1.05v1.12h-1.05zM5,2.06h1.05v1.12h-1.05zM6,2.06h1.05v1.12h-1.05zM10,2.06h1.05v1.12h-1.05zM2,3.12h1.05v1.12h-1.05zM5,3.12h1.05v1.12h-1.05zM6,3.12h1.05v1.12h-1.05zM7,3.12h1.05v1.12h-1.05zM9,3.12h1.05v1.12h-1.05zM4,4.18h1.05v1.12h-1.05zM5,4.18h1.05v1.12h-1.05zM6,4.18h1.05v1.12h-1.05zM9,4.18h1.05v1.12h-1.05zM10,5.24h1.05v1.12h-1.05zM5,6.30h1.05v1.12h-1.05zM7,6.30h1.05v1.12h-1.05zM9,8.42h1.05v1.12h-1.05zM9,9.48h1.05v1.12h-1.05z" fill="#f4f8fc"/><path d="M3,1.00h1.05v1.12h-1.05zM4,2.06h1.05v1.12h-1.05zM8,2.06h1.05v1.12h-1.05zM8,3.12h1.05v1.12h-1.05zM1,4.18h1.05v1.12h-1.05zM3,4.18h1.05v1.12h-1.05zM7,4.18h1.05v1.12h-1.05zM1,5.24h1.05v1.12h-1.05zM4,5.24h1.05v1.12h-1.05zM6,5.24h1.05v1.12h-1.05zM9,5.24h1.05v1.12h-1.05zM3,6.30h1.05v1.12h-1.05zM6,6.30h1.05v1.12h-1.05zM8,6.30h1.05v1.12h-1.05zM9,6.30h1.05v1.12h-1.05zM10,6.30h1.05v1.12h-1.05zM4,7.36h1.05v1.12h-1.05zM5,7.36h1.05v1.12h-1.05zM6,7.36h1.05v1.12h-1.05zM10,7.36h1.05v1.12h-1.05zM8,8.42h1.05v1.12h-1.05zM7,9.48h1.05v1.12h-1.05zM10,9.48h1.05v1.12h-1.05zM5,10.54h1.05v1.12h-1.05zM6,10.54h1.05v1.12h-1.05zM7,10.54h1.05v1.12h-1.05z" fill="#4a8ccc"/><path d="M1,3.12h1.05v1.12h-1.05zM3,3.12h1.05v1.12h-1.05zM3,5.24h1.05v1.12h-1.05zM8,5.24h1.05v1.12h-1.05zM1,6.30h1.05v1.12h-1.05zM4,6.30h1.05v1.12h-1.05zM1,7.36h1.05v1.12h-1.05zM3,7.36h1.05v1.12h-1.05zM7,7.36h1.05v1.12h-1.05zM8,7.36h1.05v1.12h-1.05zM2,8.42h1.05v1.12h-1.05zM3,8.42h1.05v1.12h-1.05zM4,8.42h1.05v1.12h-1.05zM5,8.42h1.05v1.12h-1.05zM4,9.48h1.05v1.12h-1.05zM8,9.48h1.05v1.12h-1.05zM1,10.54h1.05v1.12h-1.05zM2,10.54h1.05v1.12h-1.05zM3,10.54h1.05v1.12h-1.05zM4,10.54h1.05v1.12h-1.05zM8,10.54h1.05v1.12h-1.05zM9,10.54h1.05v1.12h-1.05z" fill="#115ea8"/></svg></div><div class="tree" style="left:61.8px;top:535.1px">xyMultiplicityDSSD2</div><svg class="abs" style="left:38px;top:540px" width="10" height="2"><path d="M0.6,1.5H9.2" stroke="#b4b4b4" stroke-width="1"/></svg><div class="abs" style="left:47px;top:550px;width:12px;height:13px"><svg width="12" height="13" shape-rendering="crispEdges"><rect x="0.5" y="0.5" width="11" height="11.6" fill="#dde6ee" stroke="#b5b5b0" stroke-width="0.9"/><path d="M1,1.00h1.05v1.12h-1.05zM5,1.00h1.05v1.12h-1.05zM8,1.00h1.05v1.12h-1.05zM3,2.06h1.05v1.12h-1.05zM7,2.06h1.05v1.12h-1.05zM9,2.06h1.05v1.12h-1.05zM4,3.12h1.05v1.12h-1.05zM10,3.12h1.05v1.12h-1.05zM2,4.18h1.05v1.12h-1.05zM8,4.18h1.05v1.12h-1.05zM10,4.18h1.05v1.12h-1.05zM2,5.24h1.05v1.12h-1.05zM5,5.24h1.05v1.12h-1.05zM7,5.24h1.05v1.12h-1.05zM2,6.30h1.05v1.12h-1.05zM2,7.36h1.05v1.12h-1.05zM9,7.36h1.05v1.12h-1.05zM1,8.42h1.05v1.12h-1.05zM6,8.42h1.05v1.12h-1.05zM7,8.42h1.05v1.12h-1.05zM10,8.42h1.05v1.12h-1.05zM1,9.48h1.05v1.12h-1.05zM2,9.48h1.05v1.12h-1.05zM3,9.48h1.05v1.12h-1.05zM5,9.48h1.05v1.12h-1.05zM6,9.48h1.05v1.12h-1.05zM10,10.54h1.05v1.12h-1.05z" fill="#a8cae8"/><path d="M2,1.00h1.05v1.12h-1.05zM4,1.00h1.05v1.12h-1.05zM6,1.00h1.05v1.12h-1.05zM7,1.00h1.05v1.12h-1.05zM9,1.00h1.05v1.12h-1.05zM10,1.00h1.05v1.12h-1.05zM1,2.06h1.05v1.12h-1.05zM2,2.06h1.05v1.12h-1.05zM5,2.06h1.05v1.12h-1.05zM6,2.06h1.05v1.12h-1.05zM10,2.06h1.05v1.12h-1.05zM2,3.12h1.05v1.12h-1.05zM5,3.12h1.05v1.12h-1.05zM6,3.12h1.05v1.12h-1.05zM7,3.12h1.05v1.12h-1.05zM9,3.12h1.05v1.12h-1.05zM4,4.18h1.05v1.12h-1.05zM5,4.18h1.05v1.12h-1.05zM6,4.18h1.05v1.12h-1.05zM9,4.18h1.05v1.12h-1.05zM10,5.24h1.05v1.12h-1.05zM5,6.30h1.05v1.12h-1.05zM7,6.30h1.05v1.12h-1.05zM9,8.42h1.05v1.12h-1.05zM9,9.48h1.05v1.12h-1.05z" fill="#f4f8fc"/><path d="M3,1.00h1.05v1.12h-1.05zM4,2.06h1.05v1.12h-1.05zM8,2.06h1.05v1.12h-1.05zM8,3.12h1.05v1.12h-1.05zM1,4.18h1.05v1.12h-1.05zM3,4.18h1.05v1.12h-1.05zM7,4.18h1.05v1.12h-1.05zM1,5.24h1.05v1.12h-1.05zM4,5.24h1.05v1.12h-1.05zM6,5.24h1.05v1.12h-1.05zM9,5.24h1.05v1.12h-1.05zM3,6.30h1.05v1.12h-1.05zM6,6.30h1.05v1.12h-1.05zM8,6.30h1.05v1.12h-1.05zM9,6.30h1.05v1.12h-1.05zM10,6.30h1.05v1.12h-1.05zM4,7.36h1.05v1.12h-1.05zM5,7.36h1.05v1.12h-1.05zM6,7.36h1.05v1.12h-1.05zM10,7.36h1.05v1.12h-1.05zM8,8.42h1.05v1.12h-1.05zM7,9.48h1.05v1.12h-1.05zM10,9.48h1.05v1.12h-1.05zM5,10.54h1.05v1.12h-1.05zM6,10.54h1.05v1.12h-1.05zM7,10.54h1.05v1.12h-1.05z" fill="#4a8ccc"/><path d="M1,3.12h1.05v1.12h-1.05zM3,3.12h1.05v1.12h-1.05zM3,5.24h1.05v1.12h-1.05zM8,5.24h1.05v1.12h-1.05zM1,6.30h1.05v1.12h-1.05zM4,6.30h1.05v1.12h-1.05zM1,7.36h1.05v1.12h-1.05zM3,7.36h1.05v1.12h-1.05zM7,7.36h1.05v1.12h-1.05zM8,7.36h1.05v1.12h-1.05zM2,8.42h1.05v1.12h-1.05zM3,8.42h1.05v1.12h-1.05zM4,8.42h1.05v1.12h-1.05zM5,8.42h1.05v1.12h-1.05zM4,9.48h1.05v1.12h-1.05zM8,9.48h1.05v1.12h-1.05zM1,10.54h1.05v1.12h-1.05zM2,10.54h1.05v1.12h-1.05zM3,10.54h1.05v1.12h-1.05zM4,10.54h1.05v1.12h-1.05zM8,10.54h1.05v1.12h-1.05zM9,10.54h1.05v1.12h-1.05z" fill="#115ea8"/></svg></div><div class="tree" style="left:61.8px;top:549.49px">lowEnergyXYDSSD2</div><svg class="abs" style="left:38px;top:554px" width="10" height="2"><path d="M0.6,1.5H9.2" stroke="#b4b4b4" stroke-width="1"/></svg><div class="abs" style="left:47px;top:565px;width:12px;height:13px"><svg width="12" height="13" shape-rendering="crispEdges"><rect x="0.5" y="0.5" width="11" height="11.6" fill="#dde6ee" stroke="#b5b5b0" stroke-width="0.9"/><path d="M1,1.00h1.05v1.12h-1.05zM5,1.00h1.05v1.12h-1.05zM8,1.00h1.05v1.12h-1.05zM3,2.06h1.05v1.12h-1.05zM7,2.06h1.05v1.12h-1.05zM9,2.06h1.05v1.12h-1.05zM4,3.12h1.05v1.12h-1.05zM10,3.12h1.05v1.12h-1.05zM2,4.18h1.05v1.12h-1.05zM8,4.18h1.05v1.12h-1.05zM10,4.18h1.05v1.12h-1.05zM2,5.24h1.05v1.12h-1.05zM5,5.24h1.05v1.12h-1.05zM7,5.24h1.05v1.12h-1.05zM2,6.30h1.05v1.12h-1.05zM2,7.36h1.05v1.12h-1.05zM9,7.36h1.05v1.12h-1.05zM1,8.42h1.05v1.12h-1.05zM6,8.42h1.05v1.12h-1.05zM7,8.42h1.05v1.12h-1.05zM10,8.42h1.05v1.12h-1.05zM1,9.48h1.05v1.12h-1.05zM2,9.48h1.05v1.12h-1.05zM3,9.48h1.05v1.12h-1.05zM5,9.48h1.05v1.12h-1.05zM6,9.48h1.05v1.12h-1.05zM10,10.54h1.05v1.12h-1.05z" fill="#a8cae8"/><path d="M2,1.00h1.05v1.12h-1.05zM4,1.00h1.05v1.12h-1.05zM6,1.00h1.05v1.12h-1.05zM7,1.00h1.05v1.12h-1.05zM9,1.00h1.05v1.12h-1.05zM10,1.00h1.05v1.12h-1.05zM1,2.06h1.05v1.12h-1.05zM2,2.06h1.05v1.12h-1.05zM5,2.06h1.05v1.12h-1.05zM6,2.06h1.05v1.12h-1.05zM10,2.06h1.05v1.12h-1.05zM2,3.12h1.05v1.12h-1.05zM5,3.12h1.05v1.12h-1.05zM6,3.12h1.05v1.12h-1.05zM7,3.12h1.05v1.12h-1.05zM9,3.12h1.05v1.12h-1.05zM4,4.18h1.05v1.12h-1.05zM5,4.18h1.05v1.12h-1.05zM6,4.18h1.05v1.12h-1.05zM9,4.18h1.05v1.12h-1.05zM10,5.24h1.05v1.12h-1.05zM5,6.30h1.05v1.12h-1.05zM7,6.30h1.05v1.12h-1.05zM9,8.42h1.05v1.12h-1.05zM9,9.48h1.05v1.12h-1.05z" fill="#f4f8fc"/><path d="M3,1.00h1.05v1.12h-1.05zM4,2.06h1.05v1.12h-1.05zM8,2.06h1.05v1.12h-1.05zM8,3.12h1.05v1.12h-1.05zM1,4.18h1.05v1.12h-1.05zM3,4.18h1.05v1.12h-1.05zM7,4.18h1.05v1.12h-1.05zM1,5.24h1.05v1.12h-1.05zM4,5.24h1.05v1.12h-1.05zM6,5.24h1.05v1.12h-1.05zM9,5.24h1.05v1.12h-1.05zM3,6.30h1.05v1.12h-1.05zM6,6.30h1.05v1.12h-1.05zM8,6.30h1.05v1.12h-1.05zM9,6.30h1.05v1.12h-1.05zM10,6.30h1.05v1.12h-1.05zM4,7.36h1.05v1.12h-1.05zM5,7.36h1.05v1.12h-1.05zM6,7.36h1.05v1.12h-1.05zM10,7.36h1.05v1.12h-1.05zM8,8.42h1.05v1.12h-1.05zM7,9.48h1.05v1.12h-1.05zM10,9.48h1.05v1.12h-1.05zM5,10.54h1.05v1.12h-1.05zM6,10.54h1.05v1.12h-1.05zM7,10.54h1.05v1.12h-1.05z" fill="#4a8ccc"/><path d="M1,3.12h1.05v1.12h-1.05zM3,3.12h1.05v1.12h-1.05zM3,5.24h1.05v1.12h-1.05zM8,5.24h1.05v1.12h-1.05zM1,6.30h1.05v1.12h-1.05zM4,6.30h1.05v1.12h-1.05zM1,7.36h1.05v1.12h-1.05zM3,7.36h1.05v1.12h-1.05zM7,7.36h1.05v1.12h-1.05zM8,7.36h1.05v1.12h-1.05zM2,8.42h1.05v1.12h-1.05zM3,8.42h1.05v1.12h-1.05zM4,8.42h1.05v1.12h-1.05zM5,8.42h1.05v1.12h-1.05zM4,9.48h1.05v1.12h-1.05zM8,9.48h1.05v1.12h-1.05zM1,10.54h1.05v1.12h-1.05zM2,10.54h1.05v1.12h-1.05zM3,10.54h1.05v1.12h-1.05zM4,10.54h1.05v1.12h-1.05zM8,10.54h1.05v1.12h-1.05zM9,10.54h1.05v1.12h-1.05z" fill="#115ea8"/></svg></div><div class="tree" style="left:61.8px;top:563.88px">lowEnergyAngleEDSSD2</div><svg class="abs" style="left:38px;top:569px" width="10" height="2"><path d="M0.6,1.5H9.2" stroke="#b4b4b4" stroke-width="1"/></svg><div class="abs" style="left:47px;top:579px;width:12px;height:13px"><svg width="12" height="13"><rect x="0.5" y="0.5" width="11" height="11.6" fill="#fbfbfb" stroke="#b4b4b4" stroke-width="0.9"/><path d="M3,2.2v5M6,2.2v5M9,2.2v5" stroke="#dcdcdc" stroke-width="0.7"/><path d="M1,11.6 V8.6 L2,7.8 L3,4.8 L3.8,8 L5,6.2 L6,8.3 L6.8,5.6 L8,8.6 L9.2,7 L10,9 L11,9.6 V11.6 Z" fill="#a8a8a8"/><path d="M1,8.6 L2,7.8 L3,4.8 L3.8,8 L5,6.2 L6,8.3 L6.8,5.6 L8,8.6 L9.2,7 L10,9 L11,9.6" fill="none" stroke="#555" stroke-width="0.6"/></svg></div><div class="tree" style="left:61.8px;top:578.28px">lowEnergyEyTotalDSSD2</div><svg class="abs" style="left:38px;top:583px" width="10" height="2"><path d="M0.6,1.5H9.2" stroke="#b4b4b4" stroke-width="1"/></svg><div class="abs" style="left:47px;top:594px;width:12px;height:13px"><svg width="12" height="13"><rect x="0.5" y="0.5" width="11" height="11.6" fill="#fbfbfb" stroke="#b4b4b4" stroke-width="0.9"/><path d="M3,2.2v5M6,2.2v5M9,2.2v5" stroke="#dcdcdc" stroke-width="0.7"/><path d="M1,11.6 V8.6 L2,7.8 L3,4.8 L3.8,8 L5,6.2 L6,8.3 L6.8,5.6 L8,8.6 L9.2,7 L10,9 L11,9.6 V11.6 Z" fill="#a8a8a8"/><path d="M1,8.6 L2,7.8 L3,4.8 L3.8,8 L5,6.2 L6,8.3 L6.8,5.6 L8,8.6 L9.2,7 L10,9 L11,9.6" fill="none" stroke="#555" stroke-width="0.6"/></svg></div><div class="tree" style="left:61.8px;top:592.67px">lowEnergyExTotalDSSD2</div><svg class="abs" style="left:38px;top:597px" width="10" height="2"><path d="M0.6,1.5H9.2" stroke="#b4b4b4" stroke-width="1"/></svg><div class="abs" style="left:47px;top:608px;width:12px;height:13px"><svg width="12" height="13"><rect x="0.5" y="0.5" width="11" height="11.6" fill="#fbfbfb" stroke="#b4b4b4" stroke-width="0.9"/><path d="M3,2.2v5M6,2.2v5M9,2.2v5" stroke="#dcdcdc" stroke-width="0.7"/><path d="M1,11.6 V8.6 L2,7.8 L3,4.8 L3.8,8 L5,6.2 L6,8.3 L6.8,5.6 L8,8.6 L9.2,7 L10,9 L11,9.6 V11.6 Z" fill="#a8a8a8"/><path d="M1,8.6 L2,7.8 L3,4.8 L3.8,8 L5,6.2 L6,8.3 L6.8,5.6 L8,8.6 L9.2,7 L10,9 L11,9.6" fill="none" stroke="#555" stroke-width="0.6"/></svg></div><div class="tree" style="left:61.8px;top:607.07px">lowEnergyEyRateDSSD2</div><svg class="abs" style="left:38px;top:612px" width="10" height="2"><path d="M0.6,1.5H9.2" stroke="#b4b4b4" stroke-width="1"/></svg><div class="abs" style="left:47px;top:622px;width:12px;height:13px"><svg width="12" height="13"><rect x="0.5" y="0.5" width="11" height="11.6" fill="#fbfbfb" stroke="#b4b4b4" stroke-width="0.9"/><path d="M3,2.2v5M6,2.2v5M9,2.2v5" stroke="#dcdcdc" stroke-width="0.7"/><path d="M1,11.6 V8.6 L2,7.8 L3,4.8 L3.8,8 L5,6.2 L6,8.3 L6.8,5.6 L8,8.6 L9.2,7 L10,9 L11,9.6 V11.6 Z" fill="#a8a8a8"/><path d="M1,8.6 L2,7.8 L3,4.8 L3.8,8 L5,6.2 L6,8.3 L6.8,5.6 L8,8.6 L9.2,7 L10,9 L11,9.6" fill="none" stroke="#555" stroke-width="0.6"/></svg></div><div class="tree" style="left:61.8px;top:621.46px">lowEnergyExRateDSSD2</div><svg class="abs" style="left:38px;top:626px" width="10" height="2"><path d="M0.6,1.5H9.2" stroke="#b4b4b4" stroke-width="1"/></svg><div class="abs" style="left:47px;top:637px;width:12px;height:13px"><svg width="12" height="13" shape-rendering="crispEdges"><rect x="0.5" y="0.5" width="11" height="11.6" fill="#dde6ee" stroke="#b5b5b0" stroke-width="0.9"/><path d="M1,1.00h1.05v1.12h-1.05zM5,1.00h1.05v1.12h-1.05zM8,1.00h1.05v1.12h-1.05zM3,2.06h1.05v1.12h-1.05zM7,2.06h1.05v1.12h-1.05zM9,2.06h1.05v1.12h-1.05zM4,3.12h1.05v1.12h-1.05zM10,3.12h1.05v1.12h-1.05zM2,4.18h1.05v1.12h-1.05zM8,4.18h1.05v1.12h-1.05zM10,4.18h1.05v1.12h-1.05zM2,5.24h1.05v1.12h-1.05zM5,5.24h1.05v1.12h-1.05zM7,5.24h1.05v1.12h-1.05zM2,6.30h1.05v1.12h-1.05zM2,7.36h1.05v1.12h-1.05zM9,7.36h1.05v1.12h-1.05zM1,8.42h1.05v1.12h-1.05zM6,8.42h1.05v1.12h-1.05zM7,8.42h1.05v1.12h-1.05zM10,8.42h1.05v1.12h-1.05zM1,9.48h1.05v1.12h-1.05zM2,9.48h1.05v1.12h-1.05zM3,9.48h1.05v1.12h-1.05zM5,9.48h1.05v1.12h-1.05zM6,9.48h1.05v1.12h-1.05zM10,10.54h1.05v1.12h-1.05z" fill="#a8cae8"/><path d="M2,1.00h1.05v1.12h-1.05zM4,1.00h1.05v1.12h-1.05zM6,1.00h1.05v1.12h-1.05zM7,1.00h1.05v1.12h-1.05zM9,1.00h1.05v1.12h-1.05zM10,1.00h1.05v1.12h-1.05zM1,2.06h1.05v1.12h-1.05zM2,2.06h1.05v1.12h-1.05zM5,2.06h1.05v1.12h-1.05zM6,2.06h1.05v1.12h-1.05zM10,2.06h1.05v1.12h-1.05zM2,3.12h1.05v1.12h-1.05zM5,3.12h1.05v1.12h-1.05zM6,3.12h1.05v1.12h-1.05zM7,3.12h1.05v1.12h-1.05zM9,3.12h1.05v1.12h-1.05zM4,4.18h1.05v1.12h-1.05zM5,4.18h1.05v1.12h-1.05zM6,4.18h1.05v1.12h-1.05zM9,4.18h1.05v1.12h-1.05zM10,5.24h1.05v1.12h-1.05zM5,6.30h1.05v1.12h-1.05zM7,6.30h1.05v1.12h-1.05zM9,8.42h1.05v1.12h-1.05zM9,9.48h1.05v1.12h-1.05z" fill="#f4f8fc"/><path d="M3,1.00h1.05v1.12h-1.05zM4,2.06h1.05v1.12h-1.05zM8,2.06h1.05v1.12h-1.05zM8,3.12h1.05v1.12h-1.05zM1,4.18h1.05v1.12h-1.05zM3,4.18h1.05v1.12h-1.05zM7,4.18h1.05v1.12h-1.05zM1,5.24h1.05v1.12h-1.05zM4,5.24h1.05v1.12h-1.05zM6,5.24h1.05v1.12h-1.05zM9,5.24h1.05v1.12h-1.05zM3,6.30h1.05v1.12h-1.05zM6,6.30h1.05v1.12h-1.05zM8,6.30h1.05v1.12h-1.05zM9,6.30h1.05v1.12h-1.05zM10,6.30h1.05v1.12h-1.05zM4,7.36h1.05v1.12h-1.05zM5,7.36h1.05v1.12h-1.05zM6,7.36h1.05v1.12h-1.05zM10,7.36h1.05v1.12h-1.05zM8,8.42h1.05v1.12h-1.05zM7,9.48h1.05v1.12h-1.05zM10,9.48h1.05v1.12h-1.05zM5,10.54h1.05v1.12h-1.05zM6,10.54h1.05v1.12h-1.05zM7,10.54h1.05v1.12h-1.05z" fill="#4a8ccc"/><path d="M1,3.12h1.05v1.12h-1.05zM3,3.12h1.05v1.12h-1.05zM3,5.24h1.05v1.12h-1.05zM8,5.24h1.05v1.12h-1.05zM1,6.30h1.05v1.12h-1.05zM4,6.30h1.05v1.12h-1.05zM1,7.36h1.05v1.12h-1.05zM3,7.36h1.05v1.12h-1.05zM7,7.36h1.05v1.12h-1.05zM8,7.36h1.05v1.12h-1.05zM2,8.42h1.05v1.12h-1.05zM3,8.42h1.05v1.12h-1.05zM4,8.42h1.05v1.12h-1.05zM5,8.42h1.05v1.12h-1.05zM4,9.48h1.05v1.12h-1.05zM8,9.48h1.05v1.12h-1.05zM1,10.54h1.05v1.12h-1.05zM2,10.54h1.05v1.12h-1.05zM3,10.54h1.05v1.12h-1.05zM4,10.54h1.05v1.12h-1.05zM8,10.54h1.05v1.12h-1.05zM9,10.54h1.05v1.12h-1.05z" fill="#115ea8"/></svg></div><div class="tree" style="left:61.8px;top:635.86px">lowEnergyExEyDSSD3</div><svg class="abs" style="left:38px;top:641px" width="10" height="2"><path d="M0.6,1.5H9.2" stroke="#b4b4b4" stroke-width="1"/></svg><div class="abs" style="left:47px;top:651px;width:12px;height:13px"><svg width="12" height="13" shape-rendering="crispEdges"><rect x="0.5" y="0.5" width="11" height="11.6" fill="#dde6ee" stroke="#b5b5b0" stroke-width="0.9"/><path d="M1,1.00h1.05v1.12h-1.05zM5,1.00h1.05v1.12h-1.05zM8,1.00h1.05v1.12h-1.05zM3,2.06h1.05v1.12h-1.05zM7,2.06h1.05v1.12h-1.05zM9,2.06h1.05v1.12h-1.05zM4,3.12h1.05v1.12h-1.05zM10,3.12h1.05v1.12h-1.05zM2,4.18h1.05v1.12h-1.05zM8,4.18h1.05v1.12h-1.05zM10,4.18h1.05v1.12h-1.05zM2,5.24h1.05v1.12h-1.05zM5,5.24h1.05v1.12h-1.05zM7,5.24h1.05v1.12h-1.05zM2,6.30h1.05v1.12h-1.05zM2,7.36h1.05v1.12h-1.05zM9,7.36h1.05v1.12h-1.05zM1,8.42h1.05v1.12h-1.05zM6,8.42h1.05v1.12h-1.05zM7,8.42h1.05v1.12h-1.05zM10,8.42h1.05v1.12h-1.05zM1,9.48h1.05v1.12h-1.05zM2,9.48h1.05v1.12h-1.05zM3,9.48h1.05v1.12h-1.05zM5,9.48h1.05v1.12h-1.05zM6,9.48h1.05v1.12h-1.05zM10,10.54h1.05v1.12h-1.05z" fill="#a8cae8"/><path d="M2,1.00h1.05v1.12h-1.05zM4,1.00h1.05v1.12h-1.05zM6,1.00h1.05v1.12h-1.05zM7,1.00h1.05v1.12h-1.05zM9,1.00h1.05v1.12h-1.05zM10,1.00h1.05v1.12h-1.05zM1,2.06h1.05v1.12h-1.05zM2,2.06h1.05v1.12h-1.05zM5,2.06h1.05v1.12h-1.05zM6,2.06h1.05v1.12h-1.05zM10,2.06h1.05v1.12h-1.05zM2,3.12h1.05v1.12h-1.05zM5,3.12h1.05v1.12h-1.05zM6,3.12h1.05v1.12h-1.05zM7,3.12h1.05v1.12h-1.05zM9,3.12h1.05v1.12h-1.05zM4,4.18h1.05v1.12h-1.05zM5,4.18h1.05v1.12h-1.05zM6,4.18h1.05v1.12h-1.05zM9,4.18h1.05v1.12h-1.05zM10,5.24h1.05v1.12h-1.05zM5,6.30h1.05v1.12h-1.05zM7,6.30h1.05v1.12h-1.05zM9,8.42h1.05v1.12h-1.05zM9,9.48h1.05v1.12h-1.05z" fill="#f4f8fc"/><path d="M3,1.00h1.05v1.12h-1.05zM4,2.06h1.05v1.12h-1.05zM8,2.06h1.05v1.12h-1.05zM8,3.12h1.05v1.12h-1.05zM1,4.18h1.05v1.12h-1.05zM3,4.18h1.05v1.12h-1.05zM7,4.18h1.05v1.12h-1.05zM1,5.24h1.05v1.12h-1.05zM4,5.24h1.05v1.12h-1.05zM6,5.24h1.05v1.12h-1.05zM9,5.24h1.05v1.12h-1.05zM3,6.30h1.05v1.12h-1.05zM6,6.30h1.05v1.12h-1.05zM8,6.30h1.05v1.12h-1.05zM9,6.30h1.05v1.12h-1.05zM10,6.30h1.05v1.12h-1.05zM4,7.36h1.05v1.12h-1.05zM5,7.36h1.05v1.12h-1.05zM6,7.36h1.05v1.12h-1.05zM10,7.36h1.05v1.12h-1.05zM8,8.42h1.05v1.12h-1.05zM7,9.48h1.05v1.12h-1.05zM10,9.48h1.05v1.12h-1.05zM5,10.54h1.05v1.12h-1.05zM6,10.54h1.05v1.12h-1.05zM7,10.54h1.05v1.12h-1.05z" fill="#4a8ccc"/><path d="M1,3.12h1.05v1.12h-1.05zM3,3.12h1.05v1.12h-1.05zM3,5.24h1.05v1.12h-1.05zM8,5.24h1.05v1.12h-1.05zM1,6.30h1.05v1.12h-1.05zM4,6.30h1.05v1.12h-1.05zM1,7.36h1.05v1.12h-1.05zM3,7.36h1.05v1.12h-1.05zM7,7.36h1.05v1.12h-1.05zM8,7.36h1.05v1.12h-1.05zM2,8.42h1.05v1.12h-1.05zM3,8.42h1.05v1.12h-1.05zM4,8.42h1.05v1.12h-1.05zM5,8.42h1.05v1.12h-1.05zM4,9.48h1.05v1.12h-1.05zM8,9.48h1.05v1.12h-1.05zM1,10.54h1.05v1.12h-1.05zM2,10.54h1.05v1.12h-1.05zM3,10.54h1.05v1.12h-1.05zM4,10.54h1.05v1.12h-1.05zM8,10.54h1.05v1.12h-1.05zM9,10.54h1.05v1.12h-1.05z" fill="#115ea8"/></svg></div><div class="tree" style="left:61.8px;top:650.25px">xyMultiplicityDSSD3</div><svg class="abs" style="left:38px;top:655px" width="10" height="2"><path d="M0.6,1.5H9.2" stroke="#b4b4b4" stroke-width="1"/></svg><div class="abs" style="left:47px;top:666px;width:12px;height:13px"><svg width="12" height="13" shape-rendering="crispEdges"><rect x="0.5" y="0.5" width="11" height="11.6" fill="#dde6ee" stroke="#b5b5b0" stroke-width="0.9"/><path d="M1,1.00h1.05v1.12h-1.05zM5,1.00h1.05v1.12h-1.05zM8,1.00h1.05v1.12h-1.05zM3,2.06h1.05v1.12h-1.05zM7,2.06h1.05v1.12h-1.05zM9,2.06h1.05v1.12h-1.05zM4,3.12h1.05v1.12h-1.05zM10,3.12h1.05v1.12h-1.05zM2,4.18h1.05v1.12h-1.05zM8,4.18h1.05v1.12h-1.05zM10,4.18h1.05v1.12h-1.05zM2,5.24h1.05v1.12h-1.05zM5,5.24h1.05v1.12h-1.05zM7,5.24h1.05v1.12h-1.05zM2,6.30h1.05v1.12h-1.05zM2,7.36h1.05v1.12h-1.05zM9,7.36h1.05v1.12h-1.05zM1,8.42h1.05v1.12h-1.05zM6,8.42h1.05v1.12h-1.05zM7,8.42h1.05v1.12h-1.05zM10,8.42h1.05v1.12h-1.05zM1,9.48h1.05v1.12h-1.05zM2,9.48h1.05v1.12h-1.05zM3,9.48h1.05v1.12h-1.05zM5,9.48h1.05v1.12h-1.05zM6,9.48h1.05v1.12h-1.05zM10,10.54h1.05v1.12h-1.05z" fill="#a8cae8"/><path d="M2,1.00h1.05v1.12h-1.05zM4,1.00h1.05v1.12h-1.05zM6,1.00h1.05v1.12h-1.05zM7,1.00h1.05v1.12h-1.05zM9,1.00h1.05v1.12h-1.05zM10,1.00h1.05v1.12h-1.05zM1,2.06h1.05v1.12h-1.05zM2,2.06h1.05v1.12h-1.05zM5,2.06h1.05v1.12h-1.05zM6,2.06h1.05v1.12h-1.05zM10,2.06h1.05v1.12h-1.05zM2,3.12h1.05v1.12h-1.05zM5,3.12h1.05v1.12h-1.05zM6,3.12h1.05v1.12h-1.05zM7,3.12h1.05v1.12h-1.05zM9,3.12h1.05v1.12h-1.05zM4,4.18h1.05v1.12h-1.05zM5,4.18h1.05v1.12h-1.05zM6,4.18h1.05v1.12h-1.05zM9,4.18h1.05v1.12h-1.05zM10,5.24h1.05v1.12h-1.05zM5,6.30h1.05v1.12h-1.05zM7,6.30h1.05v1.12h-1.05zM9,8.42h1.05v1.12h-1.05zM9,9.48h1.05v1.12h-1.05z" fill="#f4f8fc"/><path d="M3,1.00h1.05v1.12h-1.05zM4,2.06h1.05v1.12h-1.05zM8,2.06h1.05v1.12h-1.05zM8,3.12h1.05v1.12h-1.05zM1,4.18h1.05v1.12h-1.05zM3,4.18h1.05v1.12h-1.05zM7,4.18h1.05v1.12h-1.05zM1,5.24h1.05v1.12h-1.05zM4,5.24h1.05v1.12h-1.05zM6,5.24h1.05v1.12h-1.05zM9,5.24h1.05v1.12h-1.05zM3,6.30h1.05v1.12h-1.05zM6,6.30h1.05v1.12h-1.05zM8,6.30h1.05v1.12h-1.05zM9,6.30h1.05v1.12h-1.05zM10,6.30h1.05v1.12h-1.05zM4,7.36h1.05v1.12h-1.05zM5,7.36h1.05v1.12h-1.05zM6,7.36h1.05v1.12h-1.05zM10,7.36h1.05v1.12h-1.05zM8,8.42h1.05v1.12h-1.05zM7,9.48h1.05v1.12h-1.05zM10,9.48h1.05v1.12h-1.05zM5,10.54h1.05v1.12h-1.05zM6,10.54h1.05v1.12h-1.05zM7,10.54h1.05v1.12h-1.05z" fill="#4a8ccc"/><path d="M1,3.12h1.05v1.12h-1.05zM3,3.12h1.05v1.12h-1.05zM3,5.24h1.05v1.12h-1.05zM8,5.24h1.05v1.12h-1.05zM1,6.30h1.05v1.12h-1.05zM4,6.30h1.05v1.12h-1.05zM1,7.36h1.05v1.12h-1.05zM3,7.36h1.05v1.12h-1.05zM7,7.36h1.05v1.12h-1.05zM8,7.36h1.05v1.12h-1.05zM2,8.42h1.05v1.12h-1.05zM3,8.42h1.05v1.12h-1.05zM4,8.42h1.05v1.12h-1.05zM5,8.42h1.05v1.12h-1.05zM4,9.48h1.05v1.12h-1.05zM8,9.48h1.05v1.12h-1.05zM1,10.54h1.05v1.12h-1.05zM2,10.54h1.05v1.12h-1.05zM3,10.54h1.05v1.12h-1.05zM4,10.54h1.05v1.12h-1.05zM8,10.54h1.05v1.12h-1.05zM9,10.54h1.05v1.12h-1.05z" fill="#115ea8"/></svg></div><div class="tree" style="left:61.8px;top:664.65px">lowEnergyXYDSSD3</div><svg class="abs" style="left:38px;top:669px" width="10" height="2"><path d="M0.6,1.5H9.2" stroke="#b4b4b4" stroke-width="1"/></svg><div class="abs" style="left:47px;top:680px;width:12px;height:13px"><svg width="12" height="13" shape-rendering="crispEdges"><rect x="0.5" y="0.5" width="11" height="11.6" fill="#dde6ee" stroke="#b5b5b0" stroke-width="0.9"/><path d="M1,1.00h1.05v1.12h-1.05zM5,1.00h1.05v1.12h-1.05zM8,1.00h1.05v1.12h-1.05zM3,2.06h1.05v1.12h-1.05zM7,2.06h1.05v1.12h-1.05zM9,2.06h1.05v1.12h-1.05zM4,3.12h1.05v1.12h-1.05zM10,3.12h1.05v1.12h-1.05zM2,4.18h1.05v1.12h-1.05zM8,4.18h1.05v1.12h-1.05zM10,4.18h1.05v1.12h-1.05zM2,5.24h1.05v1.12h-1.05zM5,5.24h1.05v1.12h-1.05zM7,5.24h1.05v1.12h-1.05zM2,6.30h1.05v1.12h-1.05zM2,7.36h1.05v1.12h-1.05zM9,7.36h1.05v1.12h-1.05zM1,8.42h1.05v1.12h-1.05zM6,8.42h1.05v1.12h-1.05zM7,8.42h1.05v1.12h-1.05zM10,8.42h1.05v1.12h-1.05zM1,9.48h1.05v1.12h-1.05zM2,9.48h1.05v1.12h-1.05zM3,9.48h1.05v1.12h-1.05zM5,9.48h1.05v1.12h-1.05zM6,9.48h1.05v1.12h-1.05zM10,10.54h1.05v1.12h-1.05z" fill="#a8cae8"/><path d="M2,1.00h1.05v1.12h-1.05zM4,1.00h1.05v1.12h-1.05zM6,1.00h1.05v1.12h-1.05zM7,1.00h1.05v1.12h-1.05zM9,1.00h1.05v1.12h-1.05zM10,1.00h1.05v1.12h-1.05zM1,2.06h1.05v1.12h-1.05zM2,2.06h1.05v1.12h-1.05zM5,2.06h1.05v1.12h-1.05zM6,2.06h1.05v1.12h-1.05zM10,2.06h1.05v1.12h-1.05zM2,3.12h1.05v1.12h-1.05zM5,3.12h1.05v1.12h-1.05zM6,3.12h1.05v1.12h-1.05zM7,3.12h1.05v1.12h-1.05zM9,3.12h1.05v1.12h-1.05zM4,4.18h1.05v1.12h-1.05zM5,4.18h1.05v1.12h-1.05zM6,4.18h1.05v1.12h-1.05zM9,4.18h1.05v1.12h-1.05zM10,5.24h1.05v1.12h-1.05zM5,6.30h1.05v1.12h-1.05zM7,6.30h1.05v1.12h-1.05zM9,8.42h1.05v1.12h-1.05zM9,9.48h1.05v1.12h-1.05z" fill="#f4f8fc"/><path d="M3,1.00h1.05v1.12h-1.05zM4,2.06h1.05v1.12h-1.05zM8,2.06h1.05v1.12h-1.05zM8,3.12h1.05v1.12h-1.05zM1,4.18h1.05v1.12h-1.05zM3,4.18h1.05v1.12h-1.05zM7,4.18h1.05v1.12h-1.05zM1,5.24h1.05v1.12h-1.05zM4,5.24h1.05v1.12h-1.05zM6,5.24h1.05v1.12h-1.05zM9,5.24h1.05v1.12h-1.05zM3,6.30h1.05v1.12h-1.05zM6,6.30h1.05v1.12h-1.05zM8,6.30h1.05v1.12h-1.05zM9,6.30h1.05v1.12h-1.05zM10,6.30h1.05v1.12h-1.05zM4,7.36h1.05v1.12h-1.05zM5,7.36h1.05v1.12h-1.05zM6,7.36h1.05v1.12h-1.05zM10,7.36h1.05v1.12h-1.05zM8,8.42h1.05v1.12h-1.05zM7,9.48h1.05v1.12h-1.05zM10,9.48h1.05v1.12h-1.05zM5,10.54h1.05v1.12h-1.05zM6,10.54h1.05v1.12h-1.05zM7,10.54h1.05v1.12h-1.05z" fill="#4a8ccc"/><path d="M1,3.12h1.05v1.12h-1.05zM3,3.12h1.05v1.12h-1.05zM3,5.24h1.05v1.12h-1.05zM8,5.24h1.05v1.12h-1.05zM1,6.30h1.05v1.12h-1.05zM4,6.30h1.05v1.12h-1.05zM1,7.36h1.05v1.12h-1.05zM3,7.36h1.05v1.12h-1.05zM7,7.36h1.05v1.12h-1.05zM8,7.36h1.05v1.12h-1.05zM2,8.42h1.05v1.12h-1.05zM3,8.42h1.05v1.12h-1.05zM4,8.42h1.05v1.12h-1.05zM5,8.42h1.05v1.12h-1.05zM4,9.48h1.05v1.12h-1.05zM8,9.48h1.05v1.12h-1.05zM1,10.54h1.05v1.12h-1.05zM2,10.54h1.05v1.12h-1.05zM3,10.54h1.05v1.12h-1.05zM4,10.54h1.05v1.12h-1.05zM8,10.54h1.05v1.12h-1.05zM9,10.54h1.05v1.12h-1.05z" fill="#115ea8"/></svg></div><div class="tree" style="left:61.8px;top:679.04px">lowEnergyAngleEDSSD3</div><svg class="abs" style="left:38px;top:684px" width="10" height="2"><path d="M0.6,1.5H9.2" stroke="#b4b4b4" stroke-width="1"/></svg><div class="abs" style="left:47px;top:694px;width:12px;height:13px"><svg width="12" height="13"><rect x="0.5" y="0.5" width="11" height="11.6" fill="#fbfbfb" stroke="#b4b4b4" stroke-width="0.9"/><path d="M3,2.2v5M6,2.2v5M9,2.2v5" stroke="#dcdcdc" stroke-width="0.7"/><path d="M1,11.6 V8.6 L2,7.8 L3,4.8 L3.8,8 L5,6.2 L6,8.3 L6.8,5.6 L8,8.6 L9.2,7 L10,9 L11,9.6 V11.6 Z" fill="#a8a8a8"/><path d="M1,8.6 L2,7.8 L3,4.8 L3.8,8 L5,6.2 L6,8.3 L6.8,5.6 L8,8.6 L9.2,7 L10,9 L11,9.6" fill="none" stroke="#555" stroke-width="0.6"/></svg></div><div class="tree" style="left:61.8px;top:693.44px">lowEnergyEyTotalDSSD3</div><svg class="abs" style="left:38px;top:698px" width="10" height="2"><path d="M0.6,1.5H9.2" stroke="#b4b4b4" stroke-width="1"/></svg><div class="abs" style="left:47px;top:709px;width:12px;height:13px"><svg width="12" height="13"><rect x="0.5" y="0.5" width="11" height="11.6" fill="#fbfbfb" stroke="#b4b4b4" stroke-width="0.9"/><path d="M3,2.2v5M6,2.2v5M9,2.2v5" stroke="#dcdcdc" stroke-width="0.7"/><path d="M1,11.6 V8.6 L2,7.8 L3,4.8 L3.8,8 L5,6.2 L6,8.3 L6.8,5.6 L8,8.6 L9.2,7 L10,9 L11,9.6 V11.6 Z" fill="#a8a8a8"/><path d="M1,8.6 L2,7.8 L3,4.8 L3.8,8 L5,6.2 L6,8.3 L6.8,5.6 L8,8.6 L9.2,7 L10,9 L11,9.6" fill="none" stroke="#555" stroke-width="0.6"/></svg></div><div class="tree" style="left:61.8px;top:707.83px">lowEnergyExTotalDSSD3</div><svg class="abs" style="left:38px;top:713px" width="10" height="2"><path d="M0.6,1.5H9.2" stroke="#b4b4b4" stroke-width="1"/></svg><div class="abs" style="left:47px;top:723px;width:12px;height:13px"><svg width="12" height="13"><rect x="0.5" y="0.5" width="11" height="11.6" fill="#fbfbfb" stroke="#b4b4b4" stroke-width="0.9"/><path d="M3,2.2v5M6,2.2v5M9,2.2v5" stroke="#dcdcdc" stroke-width="0.7"/><path d="M1,11.6 V8.6 L2,7.8 L3,4.8 L3.8,8 L5,6.2 L6,8.3 L6.8,5.6 L8,8.6 L9.2,7 L10,9 L11,9.6 V11.6 Z" fill="#a8a8a8"/><path d="M1,8.6 L2,7.8 L3,4.8 L3.8,8 L5,6.2 L6,8.3 L6.8,5.6 L8,8.6 L9.2,7 L10,9 L11,9.6" fill="none" stroke="#555" stroke-width="0.6"/></svg></div><div class="tree" style="left:61.8px;top:722.23px">lowEnergyEyRateDSSD3</div><svg class="abs" style="left:38px;top:727px" width="10" height="2"><path d="M0.6,1.5H9.2" stroke="#b4b4b4" stroke-width="1"/></svg><div class="abs" style="left:47px;top:738px;width:12px;height:13px"><svg width="12" height="13"><rect x="0.5" y="0.5" width="11" height="11.6" fill="#fbfbfb" stroke="#b4b4b4" stroke-width="0.9"/><path d="M3,2.2v5M6,2.2v5M9,2.2v5" stroke="#dcdcdc" stroke-width="0.7"/><path d="M1,11.6 V8.6 L2,7.8 L3,4.8 L3.8,8 L5,6.2 L6,8.3 L6.8,5.6 L8,8.6 L9.2,7 L10,9 L11,9.6 V11.6 Z" fill="#a8a8a8"/><path d="M1,8.6 L2,7.8 L3,4.8 L3.8,8 L5,6.2 L6,8.3 L6.8,5.6 L8,8.6 L9.2,7 L10,9 L11,9.6" fill="none" stroke="#555" stroke-width="0.6"/></svg></div><div class="tree" style="left:61.8px;top:736.62px">lowEnergyExRateDSSD3</div><svg class="abs" style="left:38px;top:741px" width="10" height="2"><path d="M0.6,1.5H9.2" stroke="#b4b4b4" stroke-width="1"/></svg><div class="abs" style="left:47px;top:752px;width:12px;height:13px"><svg width="12" height="13" shape-rendering="crispEdges"><rect x="0.5" y="0.5" width="11" height="11.6" fill="#dde6ee" stroke="#b5b5b0" stroke-width="0.9"/><path d="M1,1.00h1.05v1.12h-1.05zM5,1.00h1.05v1.12h-1.05zM8,1.00h1.05v1.12h-1.05zM3,2.06h1.05v1.12h-1.05zM7,2.06h1.05v1.12h-1.05zM9,2.06h1.05v1.12h-1.05zM4,3.12h1.05v1.12h-1.05zM10,3.12h1.05v1.12h-1.05zM2,4.18h1.05v1.12h-1.05zM8,4.18h1.05v1.12h-1.05zM10,4.18h1.05v1.12h-1.05zM2,5.24h1.05v1.12h-1.05zM5,5.24h1.05v1.12h-1.05zM7,5.24h1.05v1.12h-1.05zM2,6.30h1.05v1.12h-1.05zM2,7.36h1.05v1.12h-1.05zM9,7.36h1.05v1.12h-1.05zM1,8.42h1.05v1.12h-1.05zM6,8.42h1.05v1.12h-1.05zM7,8.42h1.05v1.12h-1.05zM10,8.42h1.05v1.12h-1.05zM1,9.48h1.05v1.12h-1.05zM2,9.48h1.05v1.12h-1.05zM3,9.48h1.05v1.12h-1.05zM5,9.48h1.05v1.12h-1.05zM6,9.48h1.05v1.12h-1.05zM10,10.54h1.05v1.12h-1.05z" fill="#a8cae8"/><path d="M2,1.00h1.05v1.12h-1.05zM4,1.00h1.05v1.12h-1.05zM6,1.00h1.05v1.12h-1.05zM7,1.00h1.05v1.12h-1.05zM9,1.00h1.05v1.12h-1.05zM10,1.00h1.05v1.12h-1.05zM1,2.06h1.05v1.12h-1.05zM2,2.06h1.05v1.12h-1.05zM5,2.06h1.05v1.12h-1.05zM6,2.06h1.05v1.12h-1.05zM10,2.06h1.05v1.12h-1.05zM2,3.12h1.05v1.12h-1.05zM5,3.12h1.05v1.12h-1.05zM6,3.12h1.05v1.12h-1.05zM7,3.12h1.05v1.12h-1.05zM9,3.12h1.05v1.12h-1.05zM4,4.18h1.05v1.12h-1.05zM5,4.18h1.05v1.12h-1.05zM6,4.18h1.05v1.12h-1.05zM9,4.18h1.05v1.12h-1.05zM10,5.24h1.05v1.12h-1.05zM5,6.30h1.05v1.12h-1.05zM7,6.30h1.05v1.12h-1.05zM9,8.42h1.05v1.12h-1.05zM9,9.48h1.05v1.12h-1.05z" fill="#f4f8fc"/><path d="M3,1.00h1.05v1.12h-1.05zM4,2.06h1.05v1.12h-1.05zM8,2.06h1.05v1.12h-1.05zM8,3.12h1.05v1.12h-1.05zM1,4.18h1.05v1.12h-1.05zM3,4.18h1.05v1.12h-1.05zM7,4.18h1.05v1.12h-1.05zM1,5.24h1.05v1.12h-1.05zM4,5.24h1.05v1.12h-1.05zM6,5.24h1.05v1.12h-1.05zM9,5.24h1.05v1.12h-1.05zM3,6.30h1.05v1.12h-1.05zM6,6.30h1.05v1.12h-1.05zM8,6.30h1.05v1.12h-1.05zM9,6.30h1.05v1.12h-1.05zM10,6.30h1.05v1.12h-1.05zM4,7.36h1.05v1.12h-1.05zM5,7.36h1.05v1.12h-1.05zM6,7.36h1.05v1.12h-1.05zM10,7.36h1.05v1.12h-1.05zM8,8.42h1.05v1.12h-1.05zM7,9.48h1.05v1.12h-1.05zM10,9.48h1.05v1.12h-1.05zM5,10.54h1.05v1.12h-1.05zM6,10.54h1.05v1.12h-1.05zM7,10.54h1.05v1.12h-1.05z" fill="#4a8ccc"/><path d="M1,3.12h1.05v1.12h-1.05zM3,3.12h1.05v1.12h-1.05zM3,5.24h1.05v1.12h-1.05zM8,5.24h1.05v1.12h-1.05zM1,6.30h1.05v1.12h-1.05zM4,6.30h1.05v1.12h-1.05zM1,7.36h1.05v1.12h-1.05zM3,7.36h1.05v1.12h-1.05zM7,7.36h1.05v1.12h-1.05zM8,7.36h1.05v1.12h-1.05zM2,8.42h1.05v1.12h-1.05zM3,8.42h1.05v1.12h-1.05zM4,8.42h1.05v1.12h-1.05zM5,8.42h1.05v1.12h-1.05zM4,9.48h1.05v1.12h-1.05zM8,9.48h1.05v1.12h-1.05zM1,10.54h1.05v1.12h-1.05zM2,10.54h1.05v1.12h-1.05zM3,10.54h1.05v1.12h-1.05zM4,10.54h1.05v1.12h-1.05zM8,10.54h1.05v1.12h-1.05zM9,10.54h1.05v1.12h-1.05z" fill="#115ea8"/></svg></div><div class="tree" style="left:61.8px;top:751.02px">lowEnergyChannelADC</div><svg class="abs" style="left:38px;top:756px" width="10" height="2"><path d="M0.6,1.5H9.2" stroke="#b4b4b4" stroke-width="1"/></svg><div id="sep"></div><svg class="abs" style="left:0;top:0" width="1920" height="1014" viewBox="0 0 1920 1014"><rect x="289.5" y="131.5" width="687" height="371.3" fill="#fff" stroke="#000" stroke-width="1"/><line x1="289.5" y1="502.8" x2="976.5" y2="502.8" stroke="#000" stroke-width="1.5"/><path d="M289.5,413.6 L289.5,413.6 L290.7,413.6 L290.7,422.18 L300.13,422.18 L300.13,418.58 L309.56,418.58 L309.56,422.03 L319,422.03 L319,432.37 L328.43,432.37 L328.43,425.48 L337.86,425.48 L337.86,427.2 L347.29,427.2 L347.29,407.47 L356.72,407.47 L356.72,399.42 L366.16,399.42 L366.16,406.32 L375.59,406.32 L375.59,397.31 L385.02,397.31 L385.02,352.29 L394.45,352.29 L394.45,265.8 L403.88,265.8 L403.88,149.19 L413.32,149.19 L413.32,297.49 L422.75,297.49 L422.75,387.69 L432.18,387.69 L432.18,384.47 L441.61,384.47 L441.61,362.25 L451.04,362.25 L451.04,239.62 L460.48,239.62 L460.48,326 L469.91,326 L469.91,472.42 L479.34,472.42 L479.34,494.99 L488.77,494.99 L488.77,494.99 L498.2,494.99 L498.2,499.59 L507.64,499.59 L507.64,498.67 L517.07,498.67 L517.07,498.28 L526.5,498.28 L526.5,498.28 L535.93,498.28 L535.93,498.28 L545.36,498.28 L545.36,498.28 L554.8,498.28 L554.8,498.67 L564.23,498.67 L564.23,499.59 L573.66,499.59 L573.66,498.28 L583.09,498.28 L583.09,498.28 L592.52,498.28 L592.52,498.28 L601.96,498.28 L601.96,499.51 L611.39,499.51 L611.39,496.41 L620.82,496.41 L620.82,494.11 L630.25,494.11 L630.25,492.42 L639.68,492.42 L639.68,491.5 L649.12,491.5 L649.12,494.99 L658.55,494.99 L658.55,489.89 L667.98,489.89 L667.98,466.21 L677.41,466.21 L677.41,394.09 L686.84,394.09 L686.84,422.91 L696.28,422.91 L696.28,495.6 L705.71,495.6 L705.71,502.8 L715.14,502.8 L715.14,502.12 L724.57,502.12 L724.57,502.8 L734,502.8 L734,501.35 L743.44,501.35 L743.44,502.8 L752.87,502.8 L752.87,502.8 L762.3,502.8 L762.3,502.12 L771.73,502.12 L771.73,502.8 L781.16,502.8 L781.16,502.8 L790.6,502.8 L790.6,502.8 L800.03,502.8 L800.03,502.8 L809.46,502.8 L809.46,502.8 L818.89,502.8 L818.89,502.8 L828.32,502.8 L828.32,502.12 L837.76,502.12 L837.76,502.8 L847.19,502.8 L847.19,502.8 L856.62,502.8 L856.62,502.8 L866.05,502.8 L866.05,502.8 L875.48,502.8 L875.48,502.8 L884.92,502.8 L884.92,502.8 L894.35,502.8 L894.35,502.8 L903.78,502.8 L903.78,502.8 L913.21,502.8 L913.21,502.8 L922.64,502.8 L922.64,502.8 L932.08,502.8 L932.08,502.8 L941.51,502.8 L941.51,502.8 L950.94,502.8 L950.94,502.8 L960.37,502.8 L960.37,502.8 L969.8,502.8 L969.8,502.8 L976.5,502.8" fill="none" stroke="#1a1aa6" stroke-width="0.85" stroke-linejoin="miter"/><path d="M300.56,502.8V495.9M324.14,502.8V495.9M347.72,502.8V495.9M371.3,502.8V495.9M394.88,502.8V495.9M418.46,502.8V495.9M442.04,502.8V495.9M465.62,502.8V495.9M489.2,502.8V495.9M512.78,502.8V495.9M536.36,502.8V495.9M559.94,502.8V495.9M583.52,502.8V495.9M607.1,502.8V495.9M630.68,502.8V495.9M654.26,502.8V495.9M677.84,502.8V495.9M701.42,502.8V495.9M725,502.8V495.9M748.58,502.8V495.9M772.16,502.8V495.9M795.74,502.8V495.9M819.32,502.8V495.9M842.9,502.8V495.9M866.48,502.8V495.9M890.06,502.8V495.9M913.64,502.8V495.9M937.22,502.8V495.9M960.8,502.8V495.9" stroke="#333" stroke-width="1.1"/><path d="M371.3,502.8V489.3M489.2,502.8V489.3M607.1,502.8V489.3M725,502.8V489.3M842.9,502.8V489.3M960.8,502.8V489.3" stroke="#333" stroke-width="1.1"/><line x1="289.5" y1="131.5" x2="289.5" y2="502.8" stroke="#000" stroke-width="1"/><path d="M289.5,502.8H302.5M289.5,495.13H302.5M289.5,487.46H302.5M289.5,479.78H302.5M289.5,472.11H302.5M289.5,464.44H302.5M289.5,456.77H302.5M289.5,449.1H302.5M289.5,441.42H302.5M289.5,433.75H302.5M289.5,426.08H302.5M289.5,418.41H302.5M289.5,410.74H302.5M289.5,403.06H302.5M289.5,395.39H302.5M289.5,387.72H302.5M289.5,380.05H302.5M289.5,372.38H302.5M289.5,364.7H302.5M289.5,357.03H302.5M289.5,349.36H302.5M289.5,341.69H302.5M289.5,334.02H302.5M289.5,326.34H302.5M289.5,318.67H302.5M289.5,311H302.5M289.5,303.33H302.5M289.5,295.66H302.5M289.5,287.98H302.5M289.5,280.31H302.5M289.5,272.64H302.5M289.5,264.97H302.5M289.5,257.3H302.5M289.5,249.62H302.5M289.5,241.95H302.5M289.5,234.28H302.5M289.5,226.61H302.5M289.5,218.94H302.5M289.5,211.26H302.5M289.5,203.59H302.5M289.5,195.92H302.5M289.5,188.25H302.5M289.5,180.58H302.5M289.5,172.9H302.5M289.5,165.23H302.5M289.5,157.56H302.5M289.5,149.89H302.5M289.5,142.22H302.5M289.5,134.54H302.5" stroke="#333" stroke-width="1.1"/><path d="M289.5,502.8H315.5M289.5,464.44H315.5M289.5,426.08H315.5M289.5,387.72H315.5M289.5,349.36H315.5M289.5,311H315.5M289.5,272.64H315.5M289.5,234.28H315.5M289.5,195.92H315.5M289.5,157.56H315.5" stroke="#333" stroke-width="1.1"/><g font-family="'Liberation Sans', sans-serif" font-size="16" fill="#000"><text x="371.3" y="519.8" text-anchor="middle">3000</text><text x="489.2" y="519.8" text-anchor="middle">4000</text><text x="607.1" y="519.8" text-anchor="middle">5000</text><text x="725" y="519.8" text-anchor="middle">6000</text><text x="842.9" y="519.8" text-anchor="middle">7000</text><text x="960.8" y="519.8" text-anchor="middle">8000</text><text x="286.5" y="507.1" text-anchor="end">0</text><text x="286.5" y="468.74" text-anchor="end">100</text><text x="286.5" y="430.38" text-anchor="end">200</text><text x="286.5" y="392.02" text-anchor="end">300</text><text x="286.5" y="353.66" text-anchor="end">400</text><text x="286.5" y="315.3" text-anchor="end">500</text><text x="286.5" y="276.94" text-anchor="end">600</text><text x="286.5" y="238.58" text-anchor="end">700</text><text x="286.5" y="200.22" text-anchor="end">800</text><text x="286.5" y="161.86" text-anchor="end">900</text><text x="976.5" y="533.3" text-anchor="end">Energy [MeV]</text><text transform="translate(245.5,131.5) rotate(-90)" text-anchor="end">Counts</text></g><rect x="874.1" y="116.25" width="171.5" height="74.35" fill="#555"/><rect x="873.1" y="115.25" width="171.5" height="74.35" fill="#fff" stroke="#222" stroke-width="1"/><line x1="873.1" y1="130.25" x2="1044.6" y2="130.25" stroke="#222" stroke-width="1"/><g font-family="'Liberation Sans', sans-serif" font-size="12.8" fill="#000"><text x="958.85" y="126.45" text-anchor="middle">lowEnergyExTotalDSSD0</text><text x="882.5" y="140.85">Entries</text><text x="1035" y="140.85" text-anchor="end">1747406</text><text x="882.5" y="155.85">Mean</text><text x="1035" y="155.85" text-anchor="end">3461</text><text x="882.5" y="170.85">Std Dev</text><text x="1035" y="170.85" text-anchor="end">838.3</text><text x="882.5" y="185.85">Integral</text><text x="1035" y="185.85" text-anchor="end">8143</text></g><rect x="1147.6" y="131.5" width="686.9" height="371.3" fill="#fff" stroke="#000" stroke-width="1"/><line x1="1147.6" y1="502.8" x2="1834.5" y2="502.8" stroke="#000" stroke-width="1.5"/><path d="M1147.6,496.6 L1147.6,496.6 L1192.78,496.6 L1192.78,498.1 L1251.34,498.1 L1251.34,486.1 L1309.9,486.1 L1309.9,378.9 L1368.46,378.9 L1368.46,149 L1427.02,149 L1427.02,417.1 L1485.58,417.1 L1485.58,502.8 L1544.14,502.8 L1544.14,502.8 L1602.7,502.8 L1602.7,502.8 L1661.26,502.8 L1661.26,502.8 L1719.82,502.8 L1719.82,502.8 L1778.38,502.8 L1778.38,502.8 L1834.5,502.8" fill="none" stroke="#1a1aa6" stroke-width="0.85" stroke-linejoin="miter"/><path d="M1148.86,502.8V495.9M1163.5,502.8V495.9M1178.14,502.8V495.9M1192.78,502.8V495.9M1207.42,502.8V495.9M1222.06,502.8V495.9M1236.7,502.8V495.9M1251.34,502.8V495.9M1265.98,502.8V495.9M1280.62,502.8V495.9M1295.26,502.8V495.9M1309.9,502.8V495.9M1324.54,502.8V495.9M1339.18,502.8V495.9M1353.82,502.8V495.9M1368.46,502.8V495.9M1383.1,502.8V495.9M1397.74,502.8V495.9M1412.38,502.8V495.9M1427.02,502.8V495.9M1441.66,502.8V495.9M1456.3,502.8V495.9M1470.94,502.8V495.9M1485.58,502.8V495.9M1500.22,502.8V495.9M1514.86,502.8V495.9M1529.5,502.8V495.9M1544.14,502.8V495.9M1558.78,502.8V495.9M1573.42,502.8V495.9M1588.06,502.8V495.9M1602.7,502.8V495.9M1617.34,502.8V495.9M1631.98,502.8V495.9M1646.62,502.8V495.9M1661.26,502.8V495.9M1675.9,502.8V495.9M1690.54,502.8V495.9M1705.18,502.8V495.9M1719.82,502.8V495.9M1734.46,502.8V495.9M1749.1,502.8V495.9M1763.74,502.8V495.9M1778.38,502.8V495.9M1793.02,502.8V495.9M1807.66,502.8V495.9M1822.3,502.8V495.9" stroke="#333" stroke-width="1.1"/><path d="M1163.5,502.8V489.3M1236.7,502.8V489.3M1309.9,502.8V489.3M1383.1,502.8V489.3M1456.3,502.8V489.3M1529.5,502.8V489.3M1602.7,502.8V489.3M1675.9,502.8V489.3M1749.1,502.8V489.3M1822.3,502.8V489.3" stroke="#333" stroke-width="1.1"/><line x1="1147.6" y1="131.5" x2="1147.6" y2="502.8" stroke="#000" stroke-width="1"/><path d="M1147.6,502.8H1160.6M1147.6,493.4H1160.6M1147.6,484H1160.6M1147.6,474.59H1160.6M1147.6,465.19H1160.6M1147.6,455.79H1160.6M1147.6,446.39H1160.6M1147.6,436.99H1160.6M1147.6,427.58H1160.6M1147.6,418.18H1160.6M1147.6,408.78H1160.6M1147.6,399.38H1160.6M1147.6,389.98H1160.6M1147.6,380.57H1160.6M1147.6,371.17H1160.6M1147.6,361.77H1160.6M1147.6,352.37H1160.6M1147.6,342.97H1160.6M1147.6,333.56H1160.6M1147.6,324.16H1160.6M1147.6,314.76H1160.6M1147.6,305.36H1160.6M1147.6,295.96H1160.6M1147.6,286.55H1160.6M1147.6,277.15H1160.6M1147.6,267.75H1160.6M1147.6,258.35H1160.6M1147.6,248.95H1160.6M1147.6,239.54H1160.6M1147.6,230.14H1160.6M1147.6,220.74H1160.6M1147.6,211.34H1160.6M1147.6,201.94H1160.6M1147.6,192.53H1160.6M1147.6,183.13H1160.6M1147.6,173.73H1160.6M1147.6,164.33H1160.6M1147.6,154.93H1160.6M1147.6,145.52H1160.6M1147.6,136.12H1160.6" stroke="#333" stroke-width="1.1"/><path d="M1147.6,502.8H1173.6M1147.6,455.79H1173.6M1147.6,408.78H1173.6M1147.6,361.77H1173.6M1147.6,314.76H1173.6M1147.6,267.75H1173.6M1147.6,220.74H1173.6M1147.6,173.73H1173.6" stroke="#333" stroke-width="1.1"/><g font-family="'Liberation Sans', sans-serif" font-size="16" fill="#000"><text x="1163.5" y="519.8" text-anchor="middle">5400</text><text x="1236.7" y="519.8" text-anchor="middle">5500</text><text x="1309.9" y="519.8" text-anchor="middle">5600</text><text x="1383.1" y="519.8" text-anchor="middle">5700</text><text x="1456.3" y="519.8" text-anchor="middle">5800</text><text x="1529.5" y="519.8" text-anchor="middle">5900</text><text x="1602.7" y="519.8" text-anchor="middle">6000</text><text x="1675.9" y="519.8" text-anchor="middle">6100</text><text x="1749.1" y="519.8" text-anchor="middle">6200</text><text x="1822.3" y="519.8" text-anchor="middle">6300</text><text x="1144.6" y="507.1" text-anchor="end">0</text><text x="1144.6" y="460.09" text-anchor="end">100</text><text x="1144.6" y="413.08" text-anchor="end">200</text><text x="1144.6" y="366.07" text-anchor="end">300</text><text x="1144.6" y="319.06" text-anchor="end">400</text><text x="1144.6" y="272.05" text-anchor="end">500</text><text x="1144.6" y="225.04" text-anchor="end">600</text><text x="1144.6" y="178.03" text-anchor="end">700</text><text x="1834.5" y="533.3" text-anchor="end">Energy [MeV]</text><text transform="translate(1103.6,131.5) rotate(-90)" text-anchor="end">Counts</text></g><rect x="1731.9" y="116.25" width="171.7" height="74.35" fill="#555"/><rect x="1730.9" y="115.25" width="171.7" height="74.35" fill="#fff" stroke="#222" stroke-width="1"/><line x1="1730.9" y1="130.25" x2="1902.6" y2="130.25" stroke="#222" stroke-width="1"/><g font-family="'Liberation Sans', sans-serif" font-size="12.8" fill="#000"><text x="1816.75" y="126.45" text-anchor="middle">lowEnergyExTotalDSSD1</text><text x="1740.3" y="140.85">Entries</text><text x="1893" y="140.85" text-anchor="end">2317717</text><text x="1740.3" y="155.85">Mean</text><text x="1893" y="155.85" text-anchor="end">5705</text><text x="1740.3" y="170.85">Std Dev</text><text x="1893" y="170.85" text-anchor="end">66.25</text><text x="1740.3" y="185.85">Integral</text><text x="1893" y="185.85" text-anchor="end">1258</text></g><rect x="289.6" y="595.5" width="686.9" height="371.2" fill="#fff" stroke="#000" stroke-width="1"/><line x1="289.6" y1="966.7" x2="976.5" y2="966.7" stroke="#000" stroke-width="1.5"/><path d="M289.6,961.3 L289.6,961.3 L313.26,961.3 L313.26,958.7 L356.38,958.7 L356.38,958 L399.5,958 L399.5,955.7 L442.62,955.7 L442.62,789 L485.74,789 L485.74,613.2 L528.86,613.2 L528.86,946.8 L571.98,946.8 L571.98,965.4 L615.1,965.4 L615.1,966.7 L658.22,966.7 L658.22,965.6 L701.34,965.6 L701.34,966.7 L744.46,966.7 L744.46,966 L787.58,966 L787.58,965.6 L830.7,965.6 L830.7,966.7 L873.82,966.7 L873.82,966 L916.94,966 L916.94,966.7 L960.06,966.7 L960.06,966 L976.5,966" fill="none" stroke="#1a1aa6" stroke-width="0.85" stroke-linejoin="miter"/><path d="M291.7,966.7V959.8M318.65,966.7V959.8M345.6,966.7V959.8M372.55,966.7V959.8M399.5,966.7V959.8M426.45,966.7V959.8M453.4,966.7V959.8M480.35,966.7V959.8M507.3,966.7V959.8M534.25,966.7V959.8M561.2,966.7V959.8M588.15,966.7V959.8M615.1,966.7V959.8M642.05,966.7V959.8M669,966.7V959.8M695.95,966.7V959.8M722.9,966.7V959.8M749.85,966.7V959.8M776.8,966.7V959.8M803.75,966.7V959.8M830.7,966.7V959.8M857.65,966.7V959.8M884.6,966.7V959.8M911.55,966.7V959.8M938.5,966.7V959.8M965.45,966.7V959.8" stroke="#333" stroke-width="1.1"/><path d="M291.7,966.7V953.2M399.5,966.7V953.2M507.3,966.7V953.2M615.1,966.7V953.2M722.9,966.7V953.2M830.7,966.7V953.2M938.5,966.7V953.2" stroke="#333" stroke-width="1.1"/><line x1="289.6" y1="595.5" x2="289.6" y2="966.7" stroke="#000" stroke-width="1"/><path d="M289.6,966.7H302.6M289.6,958.34H302.6M289.6,949.98H302.6M289.6,941.61H302.6M289.6,933.25H302.6M289.6,924.89H302.6M289.6,916.53H302.6M289.6,908.17H302.6M289.6,899.8H302.6M289.6,891.44H302.6M289.6,883.08H302.6M289.6,874.72H302.6M289.6,866.36H302.6M289.6,857.99H302.6M289.6,849.63H302.6M289.6,841.27H302.6M289.6,832.91H302.6M289.6,824.55H302.6M289.6,816.18H302.6M289.6,807.82H302.6M289.6,799.46H302.6M289.6,791.1H302.6M289.6,782.74H302.6M289.6,774.37H302.6M289.6,766.01H302.6M289.6,757.65H302.6M289.6,749.29H302.6M289.6,740.93H302.6M289.6,732.56H302.6M289.6,724.2H302.6M289.6,715.84H302.6M289.6,707.48H302.6M289.6,699.12H302.6M289.6,690.75H302.6M289.6,682.39H302.6M289.6,674.03H302.6M289.6,665.67H302.6M289.6,657.31H302.6M289.6,648.94H302.6M289.6,640.58H302.6M289.6,632.22H302.6M289.6,623.86H302.6M289.6,615.5H302.6M289.6,607.13H302.6M289.6,598.77H302.6" stroke="#333" stroke-width="1.1"/><path d="M289.6,966.7H315.6M289.6,924.89H315.6M289.6,883.08H315.6M289.6,841.27H315.6M289.6,799.46H315.6M289.6,757.65H315.6M289.6,715.84H315.6M289.6,674.03H315.6M289.6,632.22H315.6" stroke="#333" stroke-width="1.1"/><g font-family="'Liberation Sans', sans-serif" font-size="16" fill="#000"><text x="291.7" y="983.7" text-anchor="middle">5400</text><text x="399.5" y="983.7" text-anchor="middle">5600</text><text x="507.3" y="983.7" text-anchor="middle">5800</text><text x="615.1" y="983.7" text-anchor="middle">6000</text><text x="722.9" y="983.7" text-anchor="middle">6200</text><text x="830.7" y="983.7" text-anchor="middle">6400</text><text x="938.5" y="983.7" text-anchor="middle">6600</text><text x="286.6" y="971" text-anchor="end">0</text><text x="286.6" y="929.19" text-anchor="end">100</text><text x="286.6" y="887.38" text-anchor="end">200</text><text x="286.6" y="845.57" text-anchor="end">300</text><text x="286.6" y="803.76" text-anchor="end">400</text><text x="286.6" y="761.95" text-anchor="end">500</text><text x="286.6" y="720.14" text-anchor="end">600</text><text x="286.6" y="678.33" text-anchor="end">700</text><text x="286.6" y="636.52" text-anchor="end">800</text><text x="976.5" y="997.2" text-anchor="end">Energy [MeV]</text><text transform="translate(245.6,595.5) rotate(-90)" text-anchor="end">Counts</text></g><rect x="874.1" y="580.6" width="171.4" height="73.7" fill="#555"/><rect x="873.1" y="579.6" width="171.4" height="73.7" fill="#fff" stroke="#222" stroke-width="1"/><line x1="873.1" y1="594.6" x2="1044.5" y2="594.6" stroke="#222" stroke-width="1"/><g font-family="'Liberation Sans', sans-serif" font-size="12.8" fill="#000"><text x="958.8" y="590.8" text-anchor="middle">lowEnergyExTotalDSSD2</text><text x="882.5" y="605.2">Entries</text><text x="1034.9" y="605.2" text-anchor="end">3107333</text><text x="882.5" y="620.2">Mean</text><text x="1034.9" y="620.2" text-anchor="end">5767</text><text x="882.5" y="635.2">Std Dev</text><text x="1034.9" y="635.2" text-anchor="end">86.39</text><text x="882.5" y="650.2">Integral</text><text x="1034.9" y="650.2" text-anchor="end">1412</text></g><rect x="1147.6" y="595.5" width="686.9" height="375.2" fill="#fff" stroke="#000" stroke-width="1"/><line x1="1147.6" y1="970.7" x2="1834.5" y2="970.7" stroke="#000" stroke-width="1.5"/><path d="M1147.6,944.4 L1147.6,944.4 L1165.3,944.4 L1165.3,948.3 L1206.3,948.3 L1206.3,927 L1247.3,927 L1247.3,939.3 L1288.3,939.3 L1288.3,829 L1329.3,829 L1329.3,613 L1370.3,613 L1370.3,652.3 L1411.3,652.3 L1411.3,944.3 L1452.3,944.3 L1452.3,970.8 L1493.3,970.8 L1493.3,970.8 L1534.3,970.8 L1534.3,970.8 L1575.3,970.8 L1575.3,970.8 L1616.3,970.8 L1616.3,970.8 L1657.3,970.8 L1657.3,970.8 L1698.3,970.8 L1698.3,970.8 L1739.3,970.8 L1739.3,970.1 L1780.3,970.1 L1780.3,970.8 L1821.3,970.8 L1821.3,970.8 L1834.5,970.8" fill="none" stroke="#1a1aa6" stroke-width="0.85" stroke-linejoin="miter"/><path d="M1149.92,970.7V963.8M1175.55,970.7V963.8M1201.17,970.7V963.8M1226.8,970.7V963.8M1252.42,970.7V963.8M1278.05,970.7V963.8M1303.67,970.7V963.8M1329.3,970.7V963.8M1354.92,970.7V963.8M1380.55,970.7V963.8M1406.17,970.7V963.8M1431.8,970.7V963.8M1457.42,970.7V963.8M1483.05,970.7V963.8M1508.67,970.7V963.8M1534.3,970.7V963.8M1559.92,970.7V963.8M1585.55,970.7V963.8M1611.17,970.7V963.8M1636.8,970.7V963.8M1662.42,970.7V963.8M1688.05,970.7V963.8M1713.67,970.7V963.8M1739.3,970.7V963.8M1764.92,970.7V963.8M1790.55,970.7V963.8M1816.17,970.7V963.8" stroke="#333" stroke-width="1.1"/><path d="M1226.8,970.7V957.2M1329.3,970.7V957.2M1431.8,970.7V957.2M1534.3,970.7V957.2M1636.8,970.7V957.2M1739.3,970.7V957.2" stroke="#333" stroke-width="1.1"/><line x1="1147.6" y1="595.5" x2="1147.6" y2="970.7" stroke="#000" stroke-width="1"/><path d="M1147.6,970.6H1160.4M1147.6,962.67H1160.4M1147.6,954.74H1160.4M1147.6,946.81H1160.4M1147.6,938.88H1160.4M1147.6,930.95H1160.4M1147.6,923.02H1160.4M1147.6,915.09H1160.4M1147.6,907.16H1160.4M1147.6,899.23H1160.4M1147.6,891.3H1160.4M1147.6,883.37H1160.4M1147.6,875.44H1160.4M1147.6,867.51H1160.4M1147.6,859.58H1160.4M1147.6,851.65H1160.4M1147.6,843.72H1160.4M1147.6,835.79H1160.4M1147.6,827.86H1160.4M1147.6,819.93H1160.4M1147.6,812H1160.4M1147.6,804.07H1160.4M1147.6,796.14H1160.4M1147.6,788.21H1160.4M1147.6,780.28H1160.4M1147.6,772.35H1160.4M1147.6,764.42H1160.4M1147.6,756.49H1160.4M1147.6,748.56H1160.4M1147.6,740.63H1160.4M1147.6,732.7H1160.4M1147.6,724.77H1160.4M1147.6,716.84H1160.4M1147.6,708.91H1160.4M1147.6,700.98H1160.4M1147.6,693.05H1160.4M1147.6,685.12H1160.4M1147.6,677.19H1160.4M1147.6,669.26H1160.4M1147.6,661.33H1160.4M1147.6,653.4H1160.4M1147.6,645.47H1160.4M1147.6,637.54H1160.4M1147.6,629.61H1160.4M1147.6,621.68H1160.4M1147.6,613.75H1160.4M1147.6,605.82H1160.4M1147.6,597.89H1160.4" stroke="#333" stroke-width="1.1"/><path d="M1147.6,970.6H1173.1M1147.6,930.95H1173.1M1147.6,891.3H1173.1M1147.6,851.65H1173.1M1147.6,812H1173.1M1147.6,772.35H1173.1M1147.6,732.7H1173.1M1147.6,693.05H1173.1M1147.6,653.4H1173.1M1147.6,613.75H1173.1" stroke="#333" stroke-width="1.1"/><g font-family="'Liberation Sans', sans-serif" font-size="16" fill="#000"><text x="1226.8" y="987.7" text-anchor="middle">5400</text><text x="1329.3" y="987.7" text-anchor="middle">5600</text><text x="1431.8" y="987.7" text-anchor="middle">5800</text><text x="1534.3" y="987.7" text-anchor="middle">6000</text><text x="1636.8" y="987.7" text-anchor="middle">6200</text><text x="1739.3" y="987.7" text-anchor="middle">6400</text><text x="1144.6" y="974.9" text-anchor="end">0</text><text x="1144.6" y="935.25" text-anchor="end">50</text><text x="1144.6" y="895.6" text-anchor="end">100</text><text x="1144.6" y="855.95" text-anchor="end">150</text><text x="1144.6" y="816.3" text-anchor="end">200</text><text x="1144.6" y="776.65" text-anchor="end">250</text><text x="1144.6" y="737" text-anchor="end">300</text><text x="1144.6" y="697.35" text-anchor="end">350</text><text x="1144.6" y="657.7" text-anchor="end">400</text><text x="1144.6" y="618.05" text-anchor="end">450</text><text x="1834.5" y="1001.2" text-anchor="end">Energy [MeV]</text><text transform="translate(1103.6,595.5) rotate(-90)" text-anchor="end">Counts</text></g><rect x="1732.2" y="580.6" width="171.3" height="73.7" fill="#555"/><rect x="1731.2" y="579.6" width="171.3" height="73.7" fill="#fff" stroke="#222" stroke-width="1"/><line x1="1731.2" y1="594.6" x2="1902.5" y2="594.6" stroke="#222" stroke-width="1"/><g font-family="'Liberation Sans', sans-serif" font-size="12.8" fill="#000"><text x="1816.85" y="590.8" text-anchor="middle">lowEnergyExTotalDSSD3</text><text x="1740.6" y="605.2">Entries</text><text x="1892.9" y="605.2" text-anchor="end">2025905</text><text x="1740.6" y="620.2">Mean</text><text x="1892.9" y="620.2" text-anchor="end">5625</text><text x="1740.6" y="635.2">Std Dev</text><text x="1892.9" y="635.2" text-anchor="end">119.0</text><text x="1740.6" y="650.2">Integral</text><text x="1892.9" y="650.2" text-anchor="end">1222</text></g><rect x="208" y="535.5" width="8.3" height="8.4" fill="#b6c8e6"/><rect x="1066" y="535.5" width="8.3" height="8.4" fill="#b6c8e6"/><rect x="208" y="999.6" width="8.3" height="8.4" fill="#b6c8e6"/><rect x="1066" y="999.6" width="8.3" height="8.4" fill="#b6c8e6"/></svg></body></html>
